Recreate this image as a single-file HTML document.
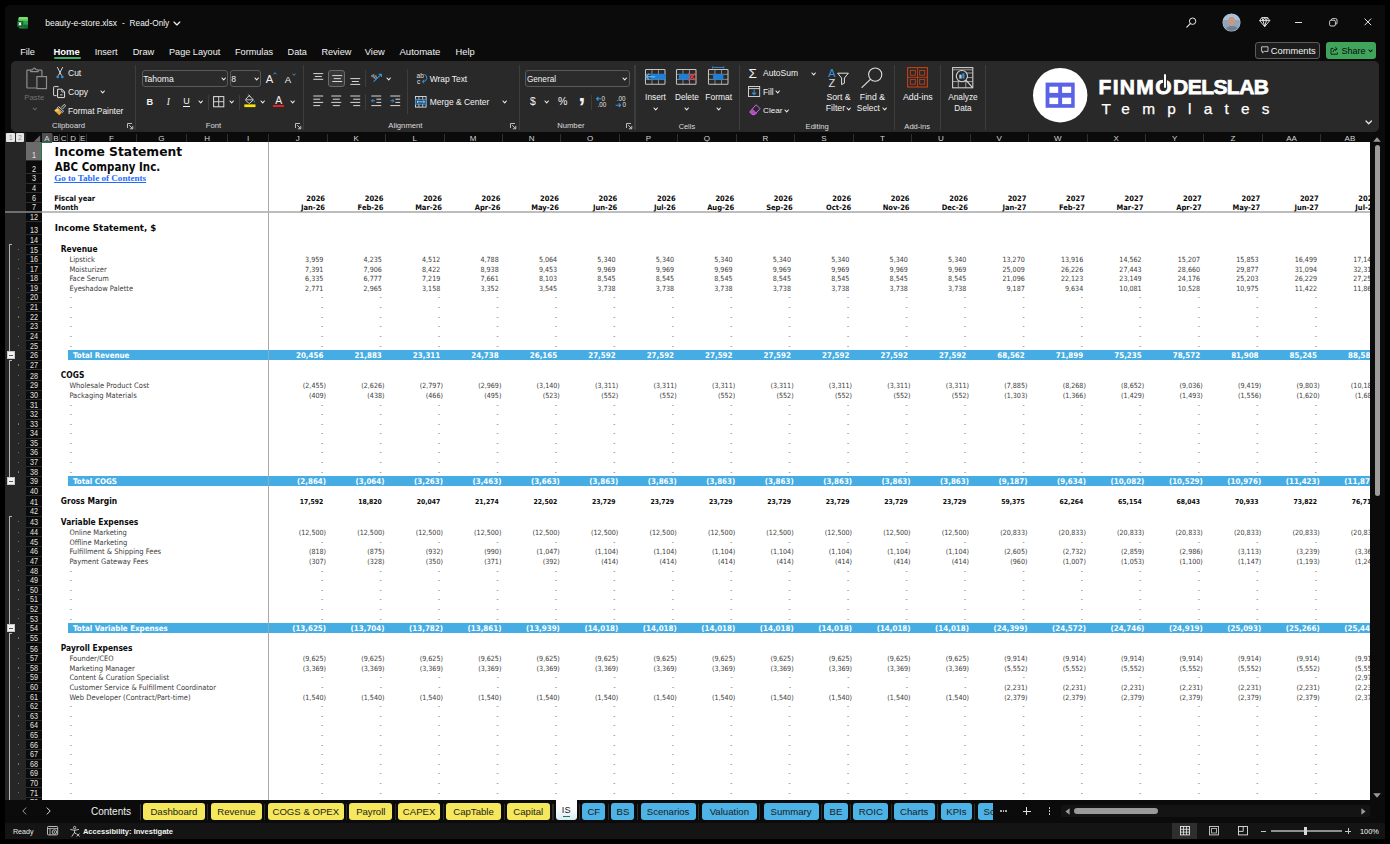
<!DOCTYPE html>
<html lang="en"><head><meta charset="utf-8"><title>beauty-e-store.xlsx - Excel</title>
<style>
html,body{margin:0;padding:0;background:#000;}
body{width:1390px;height:844px;position:relative;overflow:hidden;font-family:"Liberation Sans",sans-serif;}
.b{position:absolute;}
.t{position:absolute;white-space:nowrap;line-height:0;}
.fs{font-family:"Liberation Sans",sans-serif;}
.fd{font-family:"DejaVu Sans","Liberation Sans",sans-serif;}
.fc{font-family:"DejaVu Sans Condensed","DejaVu Sans","Liberation Sans",sans-serif;}
.fr{font-family:"Liberation Serif",serif;}
svg{position:absolute;overflow:visible;}
</style></head><body>

<div class="b" style="left:5.00px;top:5.00px;width:1380.00px;height:834.00px;background:#0b0b0b;border-radius:5px 0 0 0;"></div>
<div class="b" style="left:5.00px;top:822.70px;width:1380.00px;height:16.30px;background:#141414;"></div>
<svg style="left:17.00px;top:16.60px" width="11.2" height="11.6" viewBox="0 0 11.2 11.6"><rect x="1.6" y="0" width="9.4" height="11.4" rx="1.3" fill="#1f8a43"/>
<rect x="1.6" y="0" width="9.4" height="3.9" rx="1.3" fill="#7adf62"/><rect x="1.6" y="2.4" width="9.4" height="1.5" fill="#55c45a"/>
<rect x="6.4" y="3.9" width="4.6" height="3.8" fill="#2fa24f"/><rect x="6.4" y="7.7" width="4.6" height="3.7" rx="1" fill="#1a6a35"/>
<rect x="0" y="3.9" width="5.9" height="6" rx="0.9" fill="#0e5c2b"/>
<path d="M1.7 5.4L4.2 8.4M4.2 5.4L1.7 8.4" stroke="#fff" stroke-width="1.05"/></svg>
<div class="t fs" style="top:23.25px;font-size:8.5px;color:#f2f2f2;left:45.20px;">beauty-e-store.xlsx</div>
<div class="t fs" style="top:23.25px;font-size:8.5px;color:#f2f2f2;left:121.90px;">-</div>
<div class="t fs" style="top:23.25px;font-size:8.3px;color:#f2f2f2;left:129.60px;">Read-Only</div>
<svg style="left:172.90px;top:20.70px" width="7.8" height="5.0" viewBox="0 0 7.8 5.0"><path d="M1 1L3.90 4.00L6.80 1" fill="none" stroke="#f2f2f2" stroke-width="1.15" stroke-linecap="round" stroke-linejoin="round"/></svg>
<svg style="left:1185.50px;top:16.50px" width="11" height="11" viewBox="0 0 11 11"><circle cx="6.6" cy="4.2" r="3.2" fill="none" stroke="#e8e8e8" stroke-width="1"/><path d="M4.3 6.6L0.8 10.2" stroke="#e8e8e8" stroke-width="1.1" stroke-linecap="round"/></svg>
<div class="b" style="left:1223.2px;top:14.1px;width:16.6px;height:16.6px;border-radius:50%;overflow:hidden;background:#8fa5bd;box-shadow:0 0 0 0.5px #bfc7cf;"><div class="b" style="left:0;top:0;width:17px;height:6px;background:#adc0d4"></div><div class="b" style="left:4.9px;top:3.0px;width:7.2px;height:8.8px;border-radius:50%;background:#c39a87"></div><div class="b" style="left:1.4px;top:12.0px;width:14px;height:10px;border-radius:50%;background:#6e8095"></div></div>
<svg style="left:1259.00px;top:16.60px" width="11.4" height="10.4" viewBox="0 0 11.4 10.4"><path d="M2.8 0.6H8.6L10.8 3.6L5.7 9.6L0.6 3.6Z M0.6 3.6H10.8 M2.8 0.6L4 3.6L5.7 9.6L7.4 3.6L8.6 0.6 M4 3.6L5.7 0.6L7.4 3.6" fill="none" stroke="#e8e8e8" stroke-width="0.95" stroke-linejoin="round"/></svg>
<div class="b" style="left:1295.20px;top:21.60px;width:7.20px;height:0.90px;background:#e0e0e0;"></div>
<svg style="left:1328.50px;top:17.60px" width="9" height="9" viewBox="0 0 9 9"><rect x="0.6" y="2.2" width="5.8" height="5.8" rx="1.4" fill="none" stroke="#e0e0e0" stroke-width="0.9"/><path d="M2.4 2.2V1.9Q2.4 0.6 3.7 0.6H6.6Q8 0.6 8 2V5Q8 6.3 6.7 6.3H6.4" fill="none" stroke="#e0e0e0" stroke-width="0.9"/></svg>
<svg style="left:1363.50px;top:18.20px" width="8" height="8" viewBox="0 0 8 8"><path d="M0.6 0.6L7.2 7.2M7.2 0.6L0.6 7.2" stroke="#e8e8e8" stroke-width="1"/></svg>
<div class="b" style="left:1255.30px;top:41.50px;width:64.60px;height:17.40px;background:#1c1c1c;border:0.8px solid #5c5c5c;border-radius:3px;box-sizing:border-box;"></div>
<svg style="left:1260.60px;top:46.00px" width="8" height="8" viewBox="0 0 8 8"><path d="M0.6 0.8H7V5.4H3.2L1.6 6.9V5.4H0.6Z" fill="none" stroke="#e8e8e8" stroke-width="0.8" stroke-linejoin="round"/></svg>
<div class="t fs" style="top:51.25px;font-size:9.3px;color:#f2f2f2;left:1270.80px;">Comments</div>
<div class="b" style="left:1326.00px;top:41.50px;width:50.20px;height:17.40px;background:#3ea55b;border-radius:3px;"></div>
<svg style="left:1330.40px;top:45.60px" width="9" height="9" viewBox="0 0 9 9"><path d="M3.4 2.4H1V8.2H7.4V6.4" fill="none" stroke="#111" stroke-width="0.85"/><path d="M3 6Q3.2 3 6.6 2.9M5.2 1L7.2 2.9L5.2 4.8" fill="none" stroke="#111" stroke-width="0.85" stroke-linejoin="round"/></svg>
<div class="t fs" style="top:51.25px;font-size:9.0px;color:#0b0b0b;left:1341.40px;">Share</div>
<svg style="left:1368.00px;top:48.75px" width="5.2" height="3.7" viewBox="0 0 5.2 3.7"><path d="M1 1L2.60 2.70L4.20 1" fill="none" stroke="#0b0b0b" stroke-width="1.035" stroke-linecap="round" stroke-linejoin="round"/></svg>
<div class="t fs" style="top:52.25px;font-size:9.15px;color:#f2f2f2;left:20.20px;">File</div>
<div class="t fs" style="top:51.75px;font-size:9.5px;color:#fff;font-weight:bold;left:53.40px;">Home</div>
<div class="t fs" style="top:52.25px;font-size:9.15px;color:#f2f2f2;left:94.70px;">Insert</div>
<div class="t fs" style="top:52.25px;font-size:9.25px;color:#f2f2f2;left:132.70px;">Draw</div>
<div class="t fs" style="top:52.25px;font-size:9.15px;color:#f2f2f2;left:169.00px;">Page Layout</div>
<div class="t fs" style="top:52.25px;font-size:9.15px;color:#f2f2f2;left:235.00px;">Formulas</div>
<div class="t fs" style="top:52.25px;font-size:9.15px;color:#f2f2f2;left:287.60px;">Data</div>
<div class="t fs" style="top:52.25px;font-size:9.15px;color:#f2f2f2;left:321.40px;">Review</div>
<div class="t fs" style="top:52.25px;font-size:9.3px;color:#f2f2f2;left:364.80px;">View</div>
<div class="t fs" style="top:51.75px;font-size:9.6px;color:#f2f2f2;left:399.40px;">Automate</div>
<div class="t fs" style="top:52.25px;font-size:9.35px;color:#f2f2f2;left:455.60px;">Help</div>
<div class="b" style="left:53.60px;top:57.20px;width:27.40px;height:1.70px;background:#3fae62;border-radius:1px;"></div>
<div class="b" style="left:11.00px;top:61.00px;width:1368.30px;height:71.00px;background:#292929;border-radius:5px;"></div>
<svg style="left:25.50px;top:66.50px" width="22" height="23" viewBox="0 0 22 23"><path d="M4.4 3.2H1.4Q0.9 3.2 0.9 3.7V20.5Q0.9 21 1.4 21H10.2M12.4 3.2H15.4Q15.9 3.2 15.9 3.7V9" fill="none" stroke="#8e8e8e" stroke-width="1.2"/>
<path d="M4.6 4.6V3L6.6 2.6Q8.4 -0.4 10.2 2.6L12.2 3V4.6Z" fill="none" stroke="#8e8e8e" stroke-width="1.1" stroke-linejoin="round"/>
<rect x="10.9" y="9.6" width="9.6" height="12" fill="#292929" stroke="#8e8e8e" stroke-width="1.2"/></svg>
<div class="t fs" style="top:97.75px;font-size:7.8px;color:#727272;left:-115.70px;width:300px;text-align:center;">Paste</div>
<svg style="left:31.60px;top:106.70px" width="5.6" height="3.8" viewBox="0 0 5.6 3.8"><path d="M1 1L2.80 2.80L4.60 1" fill="none" stroke="#6a6a6a" stroke-width="1.035" stroke-linecap="round" stroke-linejoin="round"/></svg>
<svg style="left:55.60px;top:67.20px" width="8" height="12" viewBox="0 0 8 12"><path d="M1.4 0.4L5.4 8.2M6.6 0.4L2.6 8.2" stroke="#e4e4e4" stroke-width="0.9" stroke-linecap="round"/>
<circle cx="1.7" cy="9.9" r="1.35" fill="#2f8fe0"/><circle cx="6.3" cy="9.9" r="1.35" fill="#2f8fe0"/></svg>
<div class="t fs" style="top:73.25px;font-size:8.5px;color:#f2f2f2;left:68.00px;">Cut</div>
<svg style="left:53.40px;top:85.60px" width="12.4" height="12.2" viewBox="0 0 12.4 12.2"><path d="M3.6 9.6H1.2Q0.6 9.6 0.6 9V1.2Q0.6 0.6 1.2 0.6H5.6" fill="none" stroke="#d8d8d8" stroke-width="1"/>
<path d="M4.6 3.2H9L11.6 5.8V11.2Q11.6 11.6 11.2 11.6H5Q4.6 11.6 4.6 11.2Z" fill="#292929" stroke="#e4e4e4" stroke-width="1" stroke-linejoin="round"/>
<path d="M8.8 3.4V6H11.4" fill="none" stroke="#e4e4e4" stroke-width="0.8"/><rect x="7.2" y="8" width="2.4" height="1.6" fill="#9a9a9a"/></svg>
<div class="t fs" style="top:92.25px;font-size:8.6px;color:#f2f2f2;left:68.00px;">Copy</div>
<svg style="left:100.20px;top:89.70px" width="5.4" height="3.8" viewBox="0 0 5.4 3.8"><path d="M1 1L2.70 2.80L4.40 1" fill="none" stroke="#f2f2f2" stroke-width="1.0924999999999998" stroke-linecap="round" stroke-linejoin="round"/></svg>
<svg style="left:53.80px;top:104.00px" width="12" height="11.6" viewBox="0 0 12 11.6"><path d="M7.2 3.6L9.6 0.9Q10.4 0.2 11.1 0.9Q11.7 1.6 11 2.4L8.6 5" fill="none" stroke="#e4e4e4" stroke-width="0.9"/>
<path d="M4.6 2.6L9.6 7.2L8.2 8.4L3.4 3.8Z" fill="#292929" stroke="#e4e4e4" stroke-width="0.9" stroke-linejoin="round"/>
<path d="M3.2 4.2L7.8 8.8L5.2 11.2L0.4 6.4Z" fill="#f0a62a"/><path d="M3.2 4.2L5.6 6.6L1.6 7.6L0.4 6.4Z" fill="#f7d26a"/></svg>
<div class="t fs" style="top:111.25px;font-size:8.4px;color:#f2f2f2;left:68.00px;">Format Painter</div>
<div class="t fs" style="top:125.75px;font-size:7.7px;color:#dcdcdc;left:52.10px;">Clipboard</div>
<svg style="left:126.70px;top:122.90px" width="6.4" height="6.4" viewBox="0 0 6.4 6.4"><path d="M0.5 5V0.5H5" fill="none" stroke="#d0d0d0" stroke-width="0.9"/><path d="M2.2 2.2L5.6 5.6M5.8 2.9V5.8H2.9" fill="none" stroke="#d0d0d0" stroke-width="0.9"/></svg>
<div class="b" style="left:134.80px;top:65.00px;width:1.20px;height:64.60px;background:#3d3d3d;"></div>
<div class="b" style="left:141.50px;top:70.40px;width:86.10px;height:16.60px;background:#2b2b2b;border:0.8px solid #5a5a5a;border-radius:3px;box-sizing:border-box;"></div>
<div class="t fs" style="top:79.25px;font-size:8.6px;color:#f2f2f2;left:143.20px;">Tahoma</div>
<svg style="left:220.90px;top:77.10px" width="5.4" height="3.8" viewBox="0 0 5.4 3.8"><path d="M1 1L2.70 2.80L4.40 1" fill="none" stroke="#f2f2f2" stroke-width="1.0924999999999998" stroke-linecap="round" stroke-linejoin="round"/></svg>
<div class="b" style="left:229.70px;top:70.40px;width:31.10px;height:16.60px;background:#2b2b2b;border:0.8px solid #5a5a5a;border-radius:3px;box-sizing:border-box;"></div>
<div class="t fs" style="top:79.25px;font-size:8.6px;color:#f2f2f2;left:231.30px;">8</div>
<svg style="left:253.60px;top:77.10px" width="5.4" height="3.8" viewBox="0 0 5.4 3.8"><path d="M1 1L2.70 2.80L4.40 1" fill="none" stroke="#f2f2f2" stroke-width="1.0924999999999998" stroke-linecap="round" stroke-linejoin="round"/></svg>
<div class="t fs" style="top:79.25px;font-size:11.2px;color:#f2f2f2;left:265.80px;">A</div>
<svg style="left:273.40px;top:72.40px" width="4" height="3" viewBox="0 0 4 3"><path d="M0.5 2.4L2 0.6L3.5 2.4" fill="none" stroke="#3a96dd" stroke-width="0.9"/></svg>
<div class="t fs" style="top:79.75px;font-size:9.6px;color:#f2f2f2;left:284.80px;">A</div>
<svg style="left:291.60px;top:72.60px" width="4" height="3" viewBox="0 0 4 3"><path d="M0.5 0.6L2 2.4L3.5 0.6" fill="none" stroke="#3a96dd" stroke-width="0.9"/></svg>
<div class="t fs" style="top:102.25px;font-size:9.2px;color:#f2f2f2;font-weight:bold;left:-0.10px;width:300px;text-align:center;">B</div>
<div class="t fr" style="top:102.25px;font-size:9.4px;color:#f2f2f2;left:18.20px;width:300px;text-align:center;font-style:italic;">I</div>
<div class="t fs" style="top:101.25px;font-size:9.0px;color:#f2f2f2;left:36.60px;width:300px;text-align:center;">U</div>
<div class="b" style="left:183.20px;top:105.60px;width:6.80px;height:0.80px;background:#f2f2f2;"></div>
<svg style="left:198.10px;top:99.90px" width="5.4" height="3.8" viewBox="0 0 5.4 3.8"><path d="M1 1L2.70 2.80L4.40 1" fill="none" stroke="#f2f2f2" stroke-width="1.0924999999999998" stroke-linecap="round" stroke-linejoin="round"/></svg>
<div class="b" style="left:208.00px;top:94.50px;width:1.20px;height:15.00px;background:#3d3d3d;"></div>
<svg style="left:212.60px;top:95.80px" width="11.4" height="11.4" viewBox="0 0 11.4 11.4"><rect x="0.6" y="0.6" width="10.2" height="10.2" fill="none" stroke="#dedede" stroke-width="1"/><path d="M5.7 0.6V10.8M0.6 5.7H10.8" stroke="#dedede" stroke-width="0.9"/></svg>
<svg style="left:229.30px;top:99.90px" width="5.4" height="3.8" viewBox="0 0 5.4 3.8"><path d="M1 1L2.70 2.80L4.40 1" fill="none" stroke="#f2f2f2" stroke-width="1.0924999999999998" stroke-linecap="round" stroke-linejoin="round"/></svg>
<div class="b" style="left:238.70px;top:94.50px;width:1.20px;height:15.00px;background:#3d3d3d;"></div>
<svg style="left:243.60px;top:94.40px" width="12" height="13.4" viewBox="0 0 12 13.4"><path d="M5.2 1.6L9.4 5.8L5.8 9.2Q5.2 9.6 4.6 9.2L1.8 6.4Q1.4 5.8 1.8 5.2Z" fill="none" stroke="#e4e4e4" stroke-width="0.9" stroke-linejoin="round"/>
<path d="M2 5.8H9.2" stroke="#e4e4e4" stroke-width="0.8"/><path d="M4.4 0.6L6.4 2.8" stroke="#e4e4e4" stroke-width="0.9"/>
<path d="M10.4 6.4Q11.6 8.2 10.4 8.8Q9.2 8.2 10.4 6.4Z" fill="#3a96dd"/>
<rect x="0.3" y="10.4" width="11.2" height="2.7" fill="#f7e700"/></svg>
<svg style="left:260.30px;top:99.90px" width="5.4" height="3.8" viewBox="0 0 5.4 3.8"><path d="M1 1L2.70 2.80L4.40 1" fill="none" stroke="#f2f2f2" stroke-width="1.0924999999999998" stroke-linecap="round" stroke-linejoin="round"/></svg>
<div class="t fs" style="top:100.75px;font-size:10.4px;color:#f2f2f2;left:128.80px;width:300px;text-align:center;">A</div>
<div class="b" style="left:273.20px;top:104.90px;width:11.20px;height:2.60px;background:#ee1c25;"></div>
<svg style="left:289.50px;top:99.90px" width="5.4" height="3.8" viewBox="0 0 5.4 3.8"><path d="M1 1L2.70 2.80L4.40 1" fill="none" stroke="#f2f2f2" stroke-width="1.0924999999999998" stroke-linecap="round" stroke-linejoin="round"/></svg>
<div class="t fs" style="top:125.75px;font-size:7.7px;color:#dcdcdc;left:63.40px;width:300px;text-align:center;">Font</div>
<svg style="left:294.60px;top:122.90px" width="6.4" height="6.4" viewBox="0 0 6.4 6.4"><path d="M0.5 5V0.5H5" fill="none" stroke="#d0d0d0" stroke-width="0.9"/><path d="M2.2 2.2L5.6 5.6M5.8 2.9V5.8H2.9" fill="none" stroke="#d0d0d0" stroke-width="0.9"/></svg>
<div class="b" style="left:302.90px;top:65.00px;width:1.20px;height:64.60px;background:#3d3d3d;"></div>
<svg style="left:313.00px;top:71.80px" width="12" height="12" viewBox="0 0 12 12"><path d="M0.3 1.6H10.2M1.8 4.45H8.8M0.3 7.3H10.2" stroke="#e0e0e0" stroke-width="0.95" fill="none"/></svg>
<div class="b" style="left:328.20px;top:70.20px;width:17.20px;height:16.60px;background:#383838;border:0.8px solid #6a6a6a;border-radius:3px;box-sizing:border-box;"></div>
<svg style="left:331.70px;top:73.80px" width="12" height="12" viewBox="0 0 12 12"><path d="M0.3 1.6H10.2M1.8 4.6H8.8M0.3 7.5H10.2" stroke="#e0e0e0" stroke-width="0.95" fill="none"/></svg>
<svg style="left:350.40px;top:76.70px" width="12" height="12" viewBox="0 0 12 12"><path d="M0.3 1.6H10.2M1.8 4.5H8.8M0.3 7.4H10.2" stroke="#e0e0e0" stroke-width="0.95" fill="none"/></svg>
<div class="b" style="left:364.90px;top:70.00px;width:1.20px;height:16.50px;background:#3d3d3d;"></div>
<svg style="left:371.00px;top:71.60px" width="12" height="11" viewBox="0 0 12 11"><text x="0.2" y="5.2" font-family="Liberation Sans, sans-serif" font-size="5.4" fill="#e0e0e0" transform="rotate(38 2 4)">ab</text>
<path d="M2.6 9.6L10.2 2.4M10.4 5V2.2H7.6" fill="none" stroke="#3a96dd" stroke-width="1.05" stroke-linejoin="round"/></svg>
<svg style="left:385.50px;top:76.70px" width="5.4" height="3.8" viewBox="0 0 5.4 3.8"><path d="M1 1L2.70 2.80L4.40 1" fill="none" stroke="#f2f2f2" stroke-width="1.0924999999999998" stroke-linecap="round" stroke-linejoin="round"/></svg>
<div class="b" style="left:407.00px;top:69.00px;width:1.20px;height:45.40px;background:#3d3d3d;"></div>
<svg style="left:416.80px;top:72.60px" width="11" height="11.4" viewBox="0 0 11 11.4"><text x="-0.4" y="5" font-family="Liberation Sans, sans-serif" font-size="6.6" fill="#e0e0e0">ab</text>
<text x="0" y="11" font-family="Liberation Sans, sans-serif" font-size="6.6" fill="#e0e0e0">c</text>
<path d="M7.4 1.4Q10 1.8 9.8 5.4Q9.6 8.6 5.6 8.6M7.2 6.8L5.2 8.6L7.2 10.4" fill="none" stroke="#3a96dd" stroke-width="0.95" stroke-linejoin="round"/></svg>
<div class="t fs" style="top:79.25px;font-size:8.4px;color:#f2f2f2;left:429.80px;">Wrap Text</div>
<svg style="left:313.00px;top:95.20px" width="12" height="12" viewBox="0 0 12 12"><path d="M0.3 1.0H10.2M0.3 4.2H7.2M0.3 7.4H10.2M0.3 10.6H7.2" stroke="#e0e0e0" stroke-width="0.95" fill="none"/></svg>
<svg style="left:331.40px;top:95.20px" width="12" height="12" viewBox="0 0 12 12"><path d="M0.3 1.0H10.2M1.8 4.2H8.8M0.3 7.4H10.2M1.8 10.6H8.8" stroke="#e0e0e0" stroke-width="0.95" fill="none"/></svg>
<svg style="left:350.40px;top:95.20px" width="12" height="12" viewBox="0 0 12 12"><path d="M0.3 1.0H10.2M3.2 4.2H10.2M0.3 7.4H10.2M3.2 10.6H10.2" stroke="#e0e0e0" stroke-width="0.95" fill="none"/></svg>
<div class="b" style="left:364.90px;top:93.50px;width:1.20px;height:16.50px;background:#3d3d3d;"></div>
<svg style="left:371.00px;top:95.20px" width="11" height="12" viewBox="0 0 11 12"><path d="M0.3 1H10.2M5.4 4.2H10.2M5.4 7.4H10.2M0.3 10.6H10.2" stroke="#e0e0e0" stroke-width="0.95"/><path d="M4 5.8H0.6M2 4.2L0.5 5.8L2 7.4" fill="none" stroke="#3a96dd" stroke-width="0.95"/></svg>
<svg style="left:389.60px;top:95.20px" width="11" height="12" viewBox="0 0 11 12"><path d="M0.3 1H10.2M5.4 4.2H10.2M5.4 7.4H10.2M0.3 10.6H10.2" stroke="#e0e0e0" stroke-width="0.95"/><path d="M0.4 5.8H3.8M2.4 4.2L3.9 5.8L2.4 7.4" fill="none" stroke="#3a96dd" stroke-width="0.95"/></svg>
<svg style="left:414.80px;top:95.80px" width="11.6" height="11.6" viewBox="0 0 11.6 11.6"><rect x="0.5" y="0.5" width="10.6" height="10.6" fill="none" stroke="#dedede" stroke-width="0.9"/>
<rect x="0.5" y="3.4" width="10.6" height="4.8" fill="#1d4f7c" stroke="#3a96dd" stroke-width="0.9"/>
<path d="M3.9 0.5V3.4M7.7 0.5V3.4M3.9 8.2V11.1M7.7 8.2V11.1" stroke="#dedede" stroke-width="0.8"/>
<path d="M2 5.8H9.6M3.2 4.7L2 5.8L3.2 6.9M8.4 4.7L9.6 5.8L8.4 6.9" fill="none" stroke="#e8f2fb" stroke-width="0.7"/></svg>
<div class="t fs" style="top:102.25px;font-size:8.45px;color:#f2f2f2;left:429.80px;">Merge &amp; Center</div>
<svg style="left:502.10px;top:99.90px" width="5.4" height="3.8" viewBox="0 0 5.4 3.8"><path d="M1 1L2.70 2.80L4.40 1" fill="none" stroke="#f2f2f2" stroke-width="1.0924999999999998" stroke-linecap="round" stroke-linejoin="round"/></svg>
<div class="t fs" style="top:125.75px;font-size:7.7px;color:#dcdcdc;left:255.40px;width:300px;text-align:center;">Alignment</div>
<svg style="left:510.30px;top:122.90px" width="6.4" height="6.4" viewBox="0 0 6.4 6.4"><path d="M0.5 5V0.5H5" fill="none" stroke="#d0d0d0" stroke-width="0.9"/><path d="M2.2 2.2L5.6 5.6M5.8 2.9V5.8H2.9" fill="none" stroke="#d0d0d0" stroke-width="0.9"/></svg>
<div class="b" style="left:518.50px;top:65.00px;width:1.20px;height:64.60px;background:#3d3d3d;"></div>
<div class="b" style="left:525.40px;top:70.40px;width:104.20px;height:16.60px;background:#2b2b2b;border:0.8px solid #5a5a5a;border-radius:3px;box-sizing:border-box;"></div>
<div class="t fs" style="top:79.75px;font-size:8.2px;color:#f2f2f2;left:526.90px;">General</div>
<svg style="left:622.30px;top:77.10px" width="5.4" height="3.8" viewBox="0 0 5.4 3.8"><path d="M1 1L2.70 2.80L4.40 1" fill="none" stroke="#f2f2f2" stroke-width="1.0924999999999998" stroke-linecap="round" stroke-linejoin="round"/></svg>
<div class="t fs" style="top:101.75px;font-size:10.4px;color:#f2f2f2;left:383.00px;width:300px;text-align:center;">$</div>
<svg style="left:544.30px;top:99.90px" width="5.4" height="3.8" viewBox="0 0 5.4 3.8"><path d="M1 1L2.70 2.80L4.40 1" fill="none" stroke="#f2f2f2" stroke-width="1.0924999999999998" stroke-linecap="round" stroke-linejoin="round"/></svg>
<div class="t fs" style="top:101.25px;font-size:10.6px;color:#f2f2f2;left:412.60px;width:300px;text-align:center;">%</div>
<div class="t fs" style="top:107.25px;font-size:26px;color:#f2f2f2;font-weight:bold;left:431.80px;width:300px;text-align:center;">’</div>
<div class="b" style="left:590.80px;top:94.50px;width:1.20px;height:15.00px;background:#3d3d3d;"></div>
<svg style="left:596.40px;top:95.60px" width="12" height="12" viewBox="0 0 12 12"><text x="5.6" y="5" font-family="Liberation Sans, sans-serif" font-size="6.3" fill="#e0e0e0">0</text>
<text x="1.4" y="11.4" font-family="Liberation Sans, sans-serif" font-size="6.3" fill="#e0e0e0">.00</text>
<path d="M5 2.8H0.8M2.4 1L0.6 2.8L2.4 4.6" fill="none" stroke="#3a96dd" stroke-width="1.1"/></svg>
<svg style="left:615.40px;top:95.60px" width="12" height="12" viewBox="0 0 12 12"><text x="1.8" y="5" font-family="Liberation Sans, sans-serif" font-size="6.3" fill="#e0e0e0">.00</text>
<text x="7.4" y="11.4" font-family="Liberation Sans, sans-serif" font-size="6.3" fill="#e0e0e0">0</text>
<path d="M0.6 9.2H5.4M3.8 7.4L5.6 9.2L3.8 11" fill="none" stroke="#3a96dd" stroke-width="1.1"/></svg>
<div class="t fs" style="top:125.75px;font-size:7.7px;color:#dcdcdc;left:420.80px;width:300px;text-align:center;">Number</div>
<svg style="left:626.10px;top:122.90px" width="6.4" height="6.4" viewBox="0 0 6.4 6.4"><path d="M0.5 5V0.5H5" fill="none" stroke="#d0d0d0" stroke-width="0.9"/><path d="M2.2 2.2L5.6 5.6M5.8 2.9V5.8H2.9" fill="none" stroke="#d0d0d0" stroke-width="0.9"/></svg>
<div class="b" style="left:634.40px;top:65.00px;width:1.20px;height:64.60px;background:#3d3d3d;"></div>
<svg style="left:645.00px;top:67.80px" width="21.4" height="17.7" viewBox="0 0 23 19"><path d="M0.5 6.8H21.5M0.5 12.2H21.5M7.5 1.5V17.5M14.5 1.5V17.5" stroke="#9a9a9a" stroke-width="0.9"/><rect x="0.5" y="1.5" width="21" height="16" rx="0.8" fill="none" stroke="#c4c4c4" stroke-width="1.1"/><rect x="6" y="6.4" width="16.4" height="6" fill="#1f7fd6"/><path d="M11 9.4H1.2M4.6 6.2L1 9.4L4.6 12.6" fill="none" stroke="#58aef0" stroke-width="1.5"/></svg>
<svg style="left:676.30px;top:67.80px" width="21.4" height="17.7" viewBox="0 0 23 19"><path d="M0.5 6.8H21.5M0.5 12.2H21.5M7.5 1.5V17.5M14.5 1.5V17.5" stroke="#9a9a9a" stroke-width="0.9"/><rect x="0.5" y="1.5" width="21" height="16" rx="0.8" fill="none" stroke="#c4c4c4" stroke-width="1.1"/><rect x="3" y="6.4" width="11.6" height="6" fill="#1f7fd6"/><path d="M13.2 5.4L21.2 13.4M21.2 5.4L13.2 13.4" stroke="#e23b3b" stroke-width="1.4"/></svg>
<svg style="left:707.60px;top:67.80px" width="21.4" height="17.7" viewBox="0 0 23 19"><path d="M0.5 6.8H21.5M0.5 12.2H21.5M7.5 1.5V17.5M14.5 1.5V17.5" stroke="#9a9a9a" stroke-width="0.9"/><rect x="0.5" y="1.5" width="21" height="16" rx="0.8" fill="none" stroke="#c4c4c4" stroke-width="1.1"/><rect x="7.5" y="6.8" width="7" height="5.4" fill="#1f7fd6"/><rect x="5.4" y="6.6" width="11.2" height="5.8" fill="#1f7fd6"/><path d="M5 -0.6H17M5 -1.8V0.6M17 -1.8V0.6" stroke="#3a96dd" stroke-width="0.9"/></svg>
<div class="t fs" style="top:97.25px;font-size:8.3px;color:#f2f2f2;left:505.50px;width:300px;text-align:center;">Insert</div>
<svg style="left:652.80px;top:106.90px" width="5.4" height="3.8" viewBox="0 0 5.4 3.8"><path d="M1 1L2.70 2.80L4.40 1" fill="none" stroke="#f2f2f2" stroke-width="1.0924999999999998" stroke-linecap="round" stroke-linejoin="round"/></svg>
<div class="t fs" style="top:97.75px;font-size:8.2px;color:#f2f2f2;left:536.90px;width:300px;text-align:center;">Delete</div>
<svg style="left:684.20px;top:106.90px" width="5.4" height="3.8" viewBox="0 0 5.4 3.8"><path d="M1 1L2.70 2.80L4.40 1" fill="none" stroke="#f2f2f2" stroke-width="1.0924999999999998" stroke-linecap="round" stroke-linejoin="round"/></svg>
<div class="t fs" style="top:97.25px;font-size:8.5px;color:#f2f2f2;left:568.70px;width:300px;text-align:center;">Format</div>
<svg style="left:716.00px;top:106.90px" width="5.4" height="3.8" viewBox="0 0 5.4 3.8"><path d="M1 1L2.70 2.80L4.40 1" fill="none" stroke="#f2f2f2" stroke-width="1.0924999999999998" stroke-linecap="round" stroke-linejoin="round"/></svg>
<div class="t fs" style="top:126.75px;font-size:7.4px;color:#dcdcdc;left:536.90px;width:300px;text-align:center;">Cells</div>
<div class="b" style="left:739.10px;top:65.00px;width:1.20px;height:64.60px;background:#3d3d3d;"></div>
<div class="t fs" style="top:73.75px;font-size:13.6px;color:#f2f2f2;left:748.60px;">Σ</div>
<div class="t fs" style="top:73.25px;font-size:8.5px;color:#f2f2f2;left:763.10px;">AutoSum</div>
<svg style="left:811.00px;top:71.70px" width="5.4" height="3.8" viewBox="0 0 5.4 3.8"><path d="M1 1L2.70 2.80L4.40 1" fill="none" stroke="#f2f2f2" stroke-width="1.0924999999999998" stroke-linecap="round" stroke-linejoin="round"/></svg>
<svg style="left:748.40px;top:85.60px" width="12.4" height="11.4" viewBox="0 0 12.4 11.4"><rect x="0.5" y="0.5" width="11.2" height="10" fill="none" stroke="#dedede" stroke-width="0.9"/><path d="M0.5 2.6H11.7" stroke="#dedede" stroke-width="0.9"/><path d="M6.1 3.8V8.4M4 6.6L6.1 8.6L8.2 6.6" fill="none" stroke="#3a96dd" stroke-width="1.1"/></svg>
<div class="t fs" style="top:92.75px;font-size:8.2px;color:#f2f2f2;left:763.10px;">Fill</div>
<svg style="left:775.10px;top:89.70px" width="5.4" height="3.8" viewBox="0 0 5.4 3.8"><path d="M1 1L2.70 2.80L4.40 1" fill="none" stroke="#f2f2f2" stroke-width="1.0924999999999998" stroke-linecap="round" stroke-linejoin="round"/></svg>
<svg style="left:748.80px;top:104.20px" width="12" height="11.4" viewBox="0 0 12 11.4"><path d="M7 0.8L11.2 4.6L5.6 10.6H3.2L0.8 8Z" fill="none" stroke="#d768e6" stroke-width="0.95" stroke-linejoin="round"/><path d="M3.4 5.2L7.6 9.2L5.6 10.6H3.2L0.8 8Z" fill="#b54ac8" stroke="#d768e6" stroke-width="0.6" stroke-linejoin="round"/></svg>
<div class="t fs" style="top:110.75px;font-size:8.1px;color:#f2f2f2;left:763.10px;">Clear</div>
<svg style="left:783.90px;top:108.70px" width="5.4" height="3.8" viewBox="0 0 5.4 3.8"><path d="M1 1L2.70 2.80L4.40 1" fill="none" stroke="#f2f2f2" stroke-width="1.0924999999999998" stroke-linecap="round" stroke-linejoin="round"/></svg>
<svg style="left:828.20px;top:67.60px" width="22" height="20" viewBox="0 0 22 20"><text x="0.2" y="8.8" font-family="Liberation Sans, sans-serif" font-size="11" fill="#3a96dd">A</text>
<text x="0.6" y="18.8" font-family="Liberation Sans, sans-serif" font-size="11" fill="#e0e0e0">Z</text>
<path d="M9.6 5.2H20.4L16.4 10V15.2L13.6 16.6V10Z" fill="none" stroke="#e0e0e0" stroke-width="1" stroke-linejoin="round"/></svg>
<div class="t fs" style="top:97.25px;font-size:8.7px;color:#f2f2f2;left:688.50px;width:300px;text-align:center;">Sort &amp;</div>
<div class="t fs" style="top:108.25px;font-size:8.7px;color:#f2f2f2;left:685.40px;width:300px;text-align:center;">Filter</div>
<svg style="left:846.10px;top:106.70px" width="5.4" height="3.8" viewBox="0 0 5.4 3.8"><path d="M1 1L2.70 2.80L4.40 1" fill="none" stroke="#f2f2f2" stroke-width="1.0924999999999998" stroke-linecap="round" stroke-linejoin="round"/></svg>
<svg style="left:860.60px;top:67.20px" width="23" height="21" viewBox="0 0 23 21"><circle cx="14.2" cy="7.6" r="6.6" fill="none" stroke="#e0e0e0" stroke-width="1.1"/><path d="M9.4 12.4L1 20.4" stroke="#e0e0e0" stroke-width="1.2" stroke-linecap="round"/></svg>
<div class="t fs" style="top:97.25px;font-size:8.7px;color:#f2f2f2;left:722.40px;width:300px;text-align:center;">Find &amp;</div>
<div class="t fs" style="top:108.25px;font-size:8.3px;color:#f2f2f2;left:718.40px;width:300px;text-align:center;">Select</div>
<svg style="left:881.50px;top:106.70px" width="5.4" height="3.8" viewBox="0 0 5.4 3.8"><path d="M1 1L2.70 2.80L4.40 1" fill="none" stroke="#f2f2f2" stroke-width="1.0924999999999998" stroke-linecap="round" stroke-linejoin="round"/></svg>
<div class="t fs" style="top:126.75px;font-size:7.6px;color:#dcdcdc;left:667.20px;width:300px;text-align:center;">Editing</div>
<div class="b" style="left:894.20px;top:65.00px;width:1.20px;height:64.60px;background:#3d3d3d;"></div>
<svg style="left:907.20px;top:66.90px" width="21" height="20.6" viewBox="0 0 21 20.6"><rect x="0.6" y="0.6" width="19.8" height="19.4" fill="none" stroke="#bf4019" stroke-width="1.15"/><path d="M10.5 0.6V20M0.6 10.3H20.4" stroke="#bf4019" stroke-width="0.9"/><rect x="3.3" y="3.4" width="5.0" height="4.8" fill="none" stroke="#bf4019" stroke-width="0.9"/><rect x="12.7" y="3.4" width="5.0" height="4.8" fill="none" stroke="#bf4019" stroke-width="0.9"/><rect x="3.3" y="12.4" width="5.0" height="4.8" fill="none" stroke="#bf4019" stroke-width="0.9"/><rect x="12.7" y="12.4" width="5.0" height="4.8" fill="none" stroke="#bf4019" stroke-width="0.9"/></svg>
<div class="t fs" style="top:97.25px;font-size:8.8px;color:#f2f2f2;left:767.80px;width:300px;text-align:center;">Add-ins</div>
<div class="t fs" style="top:126.75px;font-size:7.6px;color:#dcdcdc;left:767.20px;width:300px;text-align:center;">Add-ins</div>
<div class="b" style="left:939.50px;top:65.00px;width:1.20px;height:64.60px;background:#3d3d3d;"></div>
<svg style="left:952.40px;top:66.80px" width="21.4" height="21.4" viewBox="0 0 21.4 21.4"><rect x="0.6" y="0.6" width="20.2" height="20.2" fill="none" stroke="#cfcfcf" stroke-width="1.1"/>
<path d="M0.6 2.8H20.8M0.6 14.6H20.8M6.3 14.6V20.8M13.8 14.6V20.8M14 6H20.8M14 10.6H20.8" stroke="#bdbdbd" stroke-width="0.8"/>
<circle cx="9.9" cy="9.1" r="5.6" fill="#292929" stroke="#d4d4d4" stroke-width="1.1"/><path d="M13.9 13.1L20.6 20.6" stroke="#d4d4d4" stroke-width="1.2"/>
<rect x="7.3" y="7.6" width="2.3" height="4" fill="#b5cfe6"/><rect x="10.3" y="6.3" width="2.2" height="5.3" fill="#2f8fe0"/></svg>
<div class="t fs" style="top:97.25px;font-size:8.3px;color:#f2f2f2;left:812.90px;width:300px;text-align:center;">Analyze</div>
<div class="t fs" style="top:108.75px;font-size:8.2px;color:#f2f2f2;left:812.90px;width:300px;text-align:center;">Data</div>
<div class="b" style="left:984.70px;top:65.00px;width:1.20px;height:64.60px;background:#3d3d3d;"></div>
<svg style="left:1032.70px;top:68.20px" width="54.4" height="54.4" viewBox="0 0 54.4 54.4"><circle cx="27.2" cy="27.2" r="27.2" fill="#fff"/><rect x="12.6" y="14.6" width="29.1" height="25.2" fill="#5a62e6"/><rect x="16.4" y="18.7" width="8.8" height="6.2" fill="#fff"/><rect x="29.1" y="18.7" width="9.1" height="6.2" fill="#fff"/><rect x="16.4" y="29.7" width="8.8" height="6.4" fill="#fff"/><rect x="29.1" y="29.7" width="9.1" height="6.4" fill="#fff"/></svg>
<div class="t fs" style="left:1098.6px;top:86.75px;font-size:21px;font-weight:bold;color:#fff;-webkit-text-stroke:0.75px #fff"><span style="letter-spacing:1.3px">FINM</span><span style="letter-spacing:1.6px">O</span><span style="letter-spacing:-0.55px">DELSLAB</span></div>
<div class="b" style="left:1162.60px;top:73.60px;width:4.80px;height:15.80px;background:#292929;border-radius:2.4px;"></div>
<div class="b" style="left:1163.70px;top:74.40px;width:2.60px;height:14.00px;background:#fff;border-radius:1.3px;"></div>
<div class="t fs" style="top:108.75px;font-size:15.4px;color:#fff;letter-spacing:12.25px;left:1101.40px;-webkit-text-stroke:0.25px #fff;">Templates</div>
<svg style="left:1364.70px;top:120.20px" width="7.4" height="4.8" viewBox="0 0 7.4 4.8"><path d="M1 1L3.70 3.80L6.40 1" fill="none" stroke="#e8e8e8" stroke-width="1.265" stroke-linecap="round" stroke-linejoin="round"/></svg>
<div class="b" style="left:5.00px;top:132.60px;width:21.00px;height:667.50px;background:#262626;"></div>
<div class="b" style="left:26.00px;top:133.00px;width:15.80px;height:667.10px;background:#0b0b0b;"></div>
<div class="b" style="left:26.00px;top:133.00px;width:1344.00px;height:9.30px;background:#0b0b0b;"></div>
<div class="b" style="left:41.80px;top:142.30px;width:1328.20px;height:657.80px;background:#fff;"></div>
<div class="b" style="left:41.80px;top:133.00px;width:10.40px;height:9.30px;background:#4f4f4f;"></div>
<div class="b" style="left:26.00px;top:142.30px;width:15.80px;height:17.70px;background:#6b6b6b;"></div>
<div class="b" style="left:41.80px;top:141.60px;width:10.60px;height:1.20px;background:#1e7a45;"></div>
<div class="b" style="left:41.20px;top:142.30px;width:1.20px;height:17.70px;background:#1e7a45;"></div>
<div class="t fs" style="top:138.75px;font-size:8.0px;color:#d4d4d4;left:-103.00px;width:300px;text-align:center;">A</div>
<div class="b" style="left:51.80px;top:134.00px;width:0.80px;height:8.30px;background:#303030;"></div>
<div class="t fs" style="top:138.75px;font-size:8.0px;color:#d4d4d4;left:-94.10px;width:300px;text-align:center;">B</div>
<div class="b" style="left:59.20px;top:134.00px;width:0.80px;height:8.30px;background:#303030;"></div>
<div class="t fs" style="top:138.75px;font-size:8.0px;color:#d4d4d4;left:-86.45px;width:300px;text-align:center;">C</div>
<div class="b" style="left:67.10px;top:134.00px;width:0.80px;height:8.30px;background:#303030;"></div>
<div class="t fs" style="top:138.75px;font-size:8.0px;color:#d4d4d4;left:-76.80px;width:300px;text-align:center;">D</div>
<div class="b" style="left:78.50px;top:134.00px;width:0.80px;height:8.30px;background:#303030;"></div>
<div class="t fs" style="top:138.75px;font-size:8.0px;color:#d4d4d4;left:-67.30px;width:300px;text-align:center;">E</div>
<div class="b" style="left:86.10px;top:134.00px;width:0.80px;height:8.30px;background:#303030;"></div>
<div class="t fs" style="top:138.75px;font-size:8.0px;color:#d4d4d4;left:-38.65px;width:300px;text-align:center;">F</div>
<div class="b" style="left:135.80px;top:134.00px;width:0.80px;height:8.30px;background:#303030;"></div>
<div class="t fs" style="top:138.75px;font-size:8.0px;color:#d4d4d4;left:11.40px;width:300px;text-align:center;">G</div>
<div class="b" style="left:186.20px;top:134.00px;width:0.80px;height:8.30px;background:#303030;"></div>
<div class="t fs" style="top:138.75px;font-size:8.0px;color:#d4d4d4;left:57.15px;width:300px;text-align:center;">H</div>
<div class="b" style="left:227.30px;top:134.00px;width:0.80px;height:8.30px;background:#303030;"></div>
<div class="t fs" style="top:138.75px;font-size:8.0px;color:#d4d4d4;left:98.15px;width:300px;text-align:center;">I</div>
<div class="b" style="left:268.20px;top:134.00px;width:0.80px;height:8.30px;background:#303030;"></div>
<div class="t fs" style="top:138.75px;font-size:8.0px;color:#d4d4d4;left:147.83px;width:300px;text-align:center;">J</div>
<div class="b" style="left:326.65px;top:134.00px;width:0.80px;height:8.30px;background:#303030;"></div>
<div class="t fs" style="top:138.75px;font-size:8.0px;color:#d4d4d4;left:206.27px;width:300px;text-align:center;">K</div>
<div class="b" style="left:385.10px;top:134.00px;width:0.80px;height:8.30px;background:#303030;"></div>
<div class="t fs" style="top:138.75px;font-size:8.0px;color:#d4d4d4;left:264.73px;width:300px;text-align:center;">L</div>
<div class="b" style="left:443.55px;top:134.00px;width:0.80px;height:8.30px;background:#303030;"></div>
<div class="t fs" style="top:138.75px;font-size:8.0px;color:#d4d4d4;left:323.17px;width:300px;text-align:center;">M</div>
<div class="b" style="left:502.00px;top:134.00px;width:0.80px;height:8.30px;background:#303030;"></div>
<div class="t fs" style="top:138.75px;font-size:8.0px;color:#d4d4d4;left:381.62px;width:300px;text-align:center;">N</div>
<div class="b" style="left:560.45px;top:134.00px;width:0.80px;height:8.30px;background:#303030;"></div>
<div class="t fs" style="top:138.75px;font-size:8.0px;color:#d4d4d4;left:440.08px;width:300px;text-align:center;">O</div>
<div class="b" style="left:618.90px;top:134.00px;width:0.80px;height:8.30px;background:#303030;"></div>
<div class="t fs" style="top:138.75px;font-size:8.0px;color:#d4d4d4;left:498.53px;width:300px;text-align:center;">P</div>
<div class="b" style="left:677.35px;top:134.00px;width:0.80px;height:8.30px;background:#303030;"></div>
<div class="t fs" style="top:138.75px;font-size:8.0px;color:#d4d4d4;left:556.98px;width:300px;text-align:center;">Q</div>
<div class="b" style="left:735.80px;top:134.00px;width:0.80px;height:8.30px;background:#303030;"></div>
<div class="t fs" style="top:138.75px;font-size:8.0px;color:#d4d4d4;left:615.43px;width:300px;text-align:center;">R</div>
<div class="b" style="left:794.25px;top:134.00px;width:0.80px;height:8.30px;background:#303030;"></div>
<div class="t fs" style="top:138.75px;font-size:8.0px;color:#d4d4d4;left:673.88px;width:300px;text-align:center;">S</div>
<div class="b" style="left:852.70px;top:134.00px;width:0.80px;height:8.30px;background:#303030;"></div>
<div class="t fs" style="top:138.75px;font-size:8.0px;color:#d4d4d4;left:732.33px;width:300px;text-align:center;">T</div>
<div class="b" style="left:911.15px;top:134.00px;width:0.80px;height:8.30px;background:#303030;"></div>
<div class="t fs" style="top:138.75px;font-size:8.0px;color:#d4d4d4;left:790.78px;width:300px;text-align:center;">U</div>
<div class="b" style="left:969.60px;top:134.00px;width:0.80px;height:8.30px;background:#303030;"></div>
<div class="t fs" style="top:138.75px;font-size:8.0px;color:#d4d4d4;left:849.23px;width:300px;text-align:center;">V</div>
<div class="b" style="left:1028.05px;top:134.00px;width:0.80px;height:8.30px;background:#303030;"></div>
<div class="t fs" style="top:138.75px;font-size:8.0px;color:#d4d4d4;left:907.68px;width:300px;text-align:center;">W</div>
<div class="b" style="left:1086.50px;top:134.00px;width:0.80px;height:8.30px;background:#303030;"></div>
<div class="t fs" style="top:138.75px;font-size:8.0px;color:#d4d4d4;left:966.13px;width:300px;text-align:center;">X</div>
<div class="b" style="left:1144.95px;top:134.00px;width:0.80px;height:8.30px;background:#303030;"></div>
<div class="t fs" style="top:138.75px;font-size:8.0px;color:#d4d4d4;left:1024.58px;width:300px;text-align:center;">Y</div>
<div class="b" style="left:1203.40px;top:134.00px;width:0.80px;height:8.30px;background:#303030;"></div>
<div class="t fs" style="top:138.75px;font-size:8.0px;color:#d4d4d4;left:1083.03px;width:300px;text-align:center;">Z</div>
<div class="b" style="left:1261.85px;top:134.00px;width:0.80px;height:8.30px;background:#303030;"></div>
<div class="t fs" style="top:138.75px;font-size:8.0px;color:#d4d4d4;left:1141.48px;width:300px;text-align:center;">AA</div>
<div class="b" style="left:1320.30px;top:134.00px;width:0.80px;height:8.30px;background:#303030;"></div>
<div class="t fs" style="top:138.75px;font-size:8.0px;color:#d4d4d4;left:1199.93px;width:300px;text-align:center;">AB</div>
<div class="t fs" style="top:155.25px;font-size:8.6px;color:#e2e2e2;left:-116.10px;width:300px;text-align:center;transform:scaleX(0.84);">1</div>
<div class="b" style="left:26.00px;top:159.60px;width:15.80px;height:0.80px;background:#2e2e2e;"></div>
<div class="t fs" style="top:169.25px;font-size:8.6px;color:#e2e2e2;left:-116.10px;width:300px;text-align:center;transform:scaleX(0.84);">2</div>
<div class="b" style="left:26.00px;top:173.10px;width:15.80px;height:0.80px;background:#2e2e2e;"></div>
<div class="t fs" style="top:178.25px;font-size:8.6px;color:#e2e2e2;left:-116.10px;width:300px;text-align:center;transform:scaleX(0.84);">3</div>
<div class="b" style="left:26.00px;top:182.60px;width:15.80px;height:0.80px;background:#2e2e2e;"></div>
<div class="t fs" style="top:188.25px;font-size:8.6px;color:#e2e2e2;left:-116.10px;width:300px;text-align:center;transform:scaleX(0.84);">4</div>
<div class="b" style="left:26.00px;top:192.30px;width:15.80px;height:0.80px;background:#2e2e2e;"></div>
<div class="t fs" style="top:198.25px;font-size:8.6px;color:#e2e2e2;left:-116.10px;width:300px;text-align:center;transform:scaleX(0.84);">6</div>
<div class="b" style="left:26.00px;top:202.10px;width:15.80px;height:0.80px;background:#2e2e2e;"></div>
<div class="t fs" style="top:207.25px;font-size:8.6px;color:#e2e2e2;left:-116.10px;width:300px;text-align:center;transform:scaleX(0.84);">7</div>
<div class="b" style="left:26.00px;top:211.20px;width:15.80px;height:0.80px;background:#2e2e2e;"></div>
<div class="t fs" style="top:217.25px;font-size:8.6px;color:#e2e2e2;left:-116.10px;width:300px;text-align:center;transform:scaleX(0.84);">12</div>
<div class="b" style="left:26.00px;top:221.20px;width:15.80px;height:0.80px;background:#2e2e2e;"></div>
<div class="t fs" style="top:230.25px;font-size:8.6px;color:#e2e2e2;left:-116.10px;width:300px;text-align:center;transform:scaleX(0.84);">13</div>
<div class="b" style="left:26.00px;top:233.90px;width:15.80px;height:0.80px;background:#2e2e2e;"></div>
<div class="t fs" style="top:240.25px;font-size:8.6px;color:#e2e2e2;left:-116.10px;width:300px;text-align:center;transform:scaleX(0.84);">14</div>
<div class="b" style="left:26.00px;top:243.80px;width:15.80px;height:0.80px;background:#2e2e2e;"></div>
<div class="t fs" style="top:250.25px;font-size:8.6px;color:#e2e2e2;left:-116.10px;width:300px;text-align:center;transform:scaleX(0.84);">15</div>
<div class="b" style="left:26.00px;top:254.03px;width:15.80px;height:0.80px;background:#2e2e2e;"></div>
<div class="t fs" style="top:259.25px;font-size:8.6px;color:#e2e2e2;left:-116.10px;width:300px;text-align:center;transform:scaleX(0.84);">16</div>
<div class="b" style="left:26.00px;top:263.10px;width:15.80px;height:0.80px;background:#2e2e2e;"></div>
<div class="t fs" style="top:269.25px;font-size:8.6px;color:#e2e2e2;left:-116.10px;width:300px;text-align:center;transform:scaleX(0.84);">17</div>
<div class="b" style="left:26.00px;top:273.00px;width:15.80px;height:0.80px;background:#2e2e2e;"></div>
<div class="t fs" style="top:278.25px;font-size:8.6px;color:#e2e2e2;left:-116.10px;width:300px;text-align:center;transform:scaleX(0.84);">18</div>
<div class="b" style="left:26.00px;top:282.60px;width:15.80px;height:0.80px;background:#2e2e2e;"></div>
<div class="t fs" style="top:288.25px;font-size:8.6px;color:#e2e2e2;left:-116.10px;width:300px;text-align:center;transform:scaleX(0.84);">19</div>
<div class="b" style="left:26.00px;top:292.20px;width:15.80px;height:0.80px;background:#2e2e2e;"></div>
<div class="t fs" style="top:297.25px;font-size:8.6px;color:#e2e2e2;left:-116.10px;width:300px;text-align:center;transform:scaleX(0.84);">20</div>
<div class="b" style="left:26.00px;top:301.82px;width:15.80px;height:0.80px;background:#2e2e2e;"></div>
<div class="t fs" style="top:307.25px;font-size:8.6px;color:#e2e2e2;left:-116.10px;width:300px;text-align:center;transform:scaleX(0.84);">21</div>
<div class="b" style="left:26.00px;top:311.44px;width:15.80px;height:0.80px;background:#2e2e2e;"></div>
<div class="t fs" style="top:317.25px;font-size:8.6px;color:#e2e2e2;left:-116.10px;width:300px;text-align:center;transform:scaleX(0.84);">22</div>
<div class="b" style="left:26.00px;top:321.06px;width:15.80px;height:0.80px;background:#2e2e2e;"></div>
<div class="t fs" style="top:326.25px;font-size:8.6px;color:#e2e2e2;left:-116.10px;width:300px;text-align:center;transform:scaleX(0.84);">23</div>
<div class="b" style="left:26.00px;top:330.69px;width:15.80px;height:0.80px;background:#2e2e2e;"></div>
<div class="t fs" style="top:336.25px;font-size:8.6px;color:#e2e2e2;left:-116.10px;width:300px;text-align:center;transform:scaleX(0.84);">24</div>
<div class="b" style="left:26.00px;top:340.31px;width:15.80px;height:0.80px;background:#2e2e2e;"></div>
<div class="t fs" style="top:346.25px;font-size:8.6px;color:#e2e2e2;left:-116.10px;width:300px;text-align:center;transform:scaleX(0.84);">25</div>
<div class="b" style="left:26.00px;top:349.93px;width:15.80px;height:0.80px;background:#2e2e2e;"></div>
<div class="t fs" style="top:355.25px;font-size:8.6px;color:#e2e2e2;left:-116.10px;width:300px;text-align:center;transform:scaleX(0.84);">26</div>
<div class="b" style="left:26.00px;top:359.55px;width:15.80px;height:0.80px;background:#2e2e2e;"></div>
<div class="t fs" style="top:365.25px;font-size:8.6px;color:#e2e2e2;left:-116.10px;width:300px;text-align:center;transform:scaleX(0.84);">27</div>
<div class="b" style="left:26.00px;top:369.20px;width:15.80px;height:0.80px;background:#2e2e2e;"></div>
<div class="t fs" style="top:376.25px;font-size:8.6px;color:#e2e2e2;left:-116.10px;width:300px;text-align:center;transform:scaleX(0.84);">28</div>
<div class="b" style="left:26.00px;top:380.10px;width:15.80px;height:0.80px;background:#2e2e2e;"></div>
<div class="t fs" style="top:385.25px;font-size:8.6px;color:#e2e2e2;left:-116.10px;width:300px;text-align:center;transform:scaleX(0.84);">29</div>
<div class="b" style="left:26.00px;top:389.75px;width:15.80px;height:0.80px;background:#2e2e2e;"></div>
<div class="t fs" style="top:395.25px;font-size:8.6px;color:#e2e2e2;left:-116.10px;width:300px;text-align:center;transform:scaleX(0.84);">30</div>
<div class="b" style="left:26.00px;top:399.35px;width:15.80px;height:0.80px;background:#2e2e2e;"></div>
<div class="t fs" style="top:405.25px;font-size:8.6px;color:#e2e2e2;left:-116.10px;width:300px;text-align:center;transform:scaleX(0.84);">31</div>
<div class="b" style="left:26.00px;top:408.93px;width:15.80px;height:0.80px;background:#2e2e2e;"></div>
<div class="t fs" style="top:414.25px;font-size:8.6px;color:#e2e2e2;left:-116.10px;width:300px;text-align:center;transform:scaleX(0.84);">32</div>
<div class="b" style="left:26.00px;top:418.52px;width:15.80px;height:0.80px;background:#2e2e2e;"></div>
<div class="t fs" style="top:424.25px;font-size:8.6px;color:#e2e2e2;left:-116.10px;width:300px;text-align:center;transform:scaleX(0.84);">33</div>
<div class="b" style="left:26.00px;top:428.10px;width:15.80px;height:0.80px;background:#2e2e2e;"></div>
<div class="t fs" style="top:433.25px;font-size:8.6px;color:#e2e2e2;left:-116.10px;width:300px;text-align:center;transform:scaleX(0.84);">34</div>
<div class="b" style="left:26.00px;top:437.68px;width:15.80px;height:0.80px;background:#2e2e2e;"></div>
<div class="t fs" style="top:443.25px;font-size:8.6px;color:#e2e2e2;left:-116.10px;width:300px;text-align:center;transform:scaleX(0.84);">35</div>
<div class="b" style="left:26.00px;top:447.27px;width:15.80px;height:0.80px;background:#2e2e2e;"></div>
<div class="t fs" style="top:452.25px;font-size:8.6px;color:#e2e2e2;left:-116.10px;width:300px;text-align:center;transform:scaleX(0.84);">36</div>
<div class="b" style="left:26.00px;top:456.85px;width:15.80px;height:0.80px;background:#2e2e2e;"></div>
<div class="t fs" style="top:462.25px;font-size:8.6px;color:#e2e2e2;left:-116.10px;width:300px;text-align:center;transform:scaleX(0.84);">37</div>
<div class="b" style="left:26.00px;top:466.43px;width:15.80px;height:0.80px;background:#2e2e2e;"></div>
<div class="t fs" style="top:472.25px;font-size:8.6px;color:#e2e2e2;left:-116.10px;width:300px;text-align:center;transform:scaleX(0.84);">38</div>
<div class="b" style="left:26.00px;top:476.02px;width:15.80px;height:0.80px;background:#2e2e2e;"></div>
<div class="t fs" style="top:481.25px;font-size:8.6px;color:#e2e2e2;left:-116.10px;width:300px;text-align:center;transform:scaleX(0.84);">39</div>
<div class="b" style="left:26.00px;top:485.60px;width:15.80px;height:0.80px;background:#2e2e2e;"></div>
<div class="t fs" style="top:491.25px;font-size:8.6px;color:#e2e2e2;left:-116.10px;width:300px;text-align:center;transform:scaleX(0.84);">40</div>
<div class="b" style="left:26.00px;top:495.24px;width:15.80px;height:0.80px;background:#2e2e2e;"></div>
<div class="t fs" style="top:502.25px;font-size:8.6px;color:#e2e2e2;left:-116.10px;width:300px;text-align:center;transform:scaleX(0.84);">41</div>
<div class="b" style="left:26.00px;top:506.13px;width:15.80px;height:0.80px;background:#2e2e2e;"></div>
<div class="t fs" style="top:511.25px;font-size:8.6px;color:#e2e2e2;left:-116.10px;width:300px;text-align:center;transform:scaleX(0.84);">42</div>
<div class="b" style="left:26.00px;top:515.77px;width:15.80px;height:0.80px;background:#2e2e2e;"></div>
<div class="t fs" style="top:522.25px;font-size:8.6px;color:#e2e2e2;left:-116.10px;width:300px;text-align:center;transform:scaleX(0.84);">43</div>
<div class="b" style="left:26.00px;top:526.66px;width:15.80px;height:0.80px;background:#2e2e2e;"></div>
<div class="t fs" style="top:532.25px;font-size:8.6px;color:#e2e2e2;left:-116.10px;width:300px;text-align:center;transform:scaleX(0.84);">44</div>
<div class="b" style="left:26.00px;top:536.30px;width:15.80px;height:0.80px;background:#2e2e2e;"></div>
<div class="t fs" style="top:542.25px;font-size:8.6px;color:#e2e2e2;left:-116.10px;width:300px;text-align:center;transform:scaleX(0.84);">45</div>
<div class="b" style="left:26.00px;top:545.90px;width:15.80px;height:0.80px;background:#2e2e2e;"></div>
<div class="t fs" style="top:551.25px;font-size:8.6px;color:#e2e2e2;left:-116.10px;width:300px;text-align:center;transform:scaleX(0.84);">46</div>
<div class="b" style="left:26.00px;top:555.50px;width:15.80px;height:0.80px;background:#2e2e2e;"></div>
<div class="t fs" style="top:561.25px;font-size:8.6px;color:#e2e2e2;left:-116.10px;width:300px;text-align:center;transform:scaleX(0.84);">47</div>
<div class="b" style="left:26.00px;top:565.30px;width:15.80px;height:0.80px;background:#2e2e2e;"></div>
<div class="t fs" style="top:571.25px;font-size:8.6px;color:#e2e2e2;left:-116.10px;width:300px;text-align:center;transform:scaleX(0.84);">48</div>
<div class="b" style="left:26.00px;top:574.91px;width:15.80px;height:0.80px;background:#2e2e2e;"></div>
<div class="t fs" style="top:580.25px;font-size:8.6px;color:#e2e2e2;left:-116.10px;width:300px;text-align:center;transform:scaleX(0.84);">49</div>
<div class="b" style="left:26.00px;top:584.53px;width:15.80px;height:0.80px;background:#2e2e2e;"></div>
<div class="t fs" style="top:590.25px;font-size:8.6px;color:#e2e2e2;left:-116.10px;width:300px;text-align:center;transform:scaleX(0.84);">50</div>
<div class="b" style="left:26.00px;top:594.14px;width:15.80px;height:0.80px;background:#2e2e2e;"></div>
<div class="t fs" style="top:599.25px;font-size:8.6px;color:#e2e2e2;left:-116.10px;width:300px;text-align:center;transform:scaleX(0.84);">51</div>
<div class="b" style="left:26.00px;top:603.76px;width:15.80px;height:0.80px;background:#2e2e2e;"></div>
<div class="t fs" style="top:609.25px;font-size:8.6px;color:#e2e2e2;left:-116.10px;width:300px;text-align:center;transform:scaleX(0.84);">52</div>
<div class="b" style="left:26.00px;top:613.37px;width:15.80px;height:0.80px;background:#2e2e2e;"></div>
<div class="t fs" style="top:619.25px;font-size:8.6px;color:#e2e2e2;left:-116.10px;width:300px;text-align:center;transform:scaleX(0.84);">53</div>
<div class="b" style="left:26.00px;top:622.99px;width:15.80px;height:0.80px;background:#2e2e2e;"></div>
<div class="t fs" style="top:628.25px;font-size:8.6px;color:#e2e2e2;left:-116.10px;width:300px;text-align:center;transform:scaleX(0.84);">54</div>
<div class="b" style="left:26.00px;top:632.60px;width:15.80px;height:0.80px;background:#2e2e2e;"></div>
<div class="t fs" style="top:638.25px;font-size:8.6px;color:#e2e2e2;left:-116.10px;width:300px;text-align:center;transform:scaleX(0.84);">55</div>
<div class="b" style="left:26.00px;top:642.19px;width:15.80px;height:0.80px;background:#2e2e2e;"></div>
<div class="t fs" style="top:649.25px;font-size:8.6px;color:#e2e2e2;left:-116.10px;width:300px;text-align:center;transform:scaleX(0.84);">56</div>
<div class="b" style="left:26.00px;top:653.01px;width:15.80px;height:0.80px;background:#2e2e2e;"></div>
<div class="t fs" style="top:658.25px;font-size:8.6px;color:#e2e2e2;left:-116.10px;width:300px;text-align:center;transform:scaleX(0.84);">57</div>
<div class="b" style="left:26.00px;top:662.60px;width:15.80px;height:0.80px;background:#2e2e2e;"></div>
<div class="t fs" style="top:668.25px;font-size:8.6px;color:#e2e2e2;left:-116.10px;width:300px;text-align:center;transform:scaleX(0.84);">58</div>
<div class="b" style="left:26.00px;top:672.05px;width:15.80px;height:0.80px;background:#2e2e2e;"></div>
<div class="t fs" style="top:677.25px;font-size:8.6px;color:#e2e2e2;left:-116.10px;width:300px;text-align:center;transform:scaleX(0.84);">59</div>
<div class="b" style="left:26.00px;top:681.70px;width:15.80px;height:0.80px;background:#2e2e2e;"></div>
<div class="t fs" style="top:687.25px;font-size:8.6px;color:#e2e2e2;left:-116.10px;width:300px;text-align:center;transform:scaleX(0.84);">60</div>
<div class="b" style="left:26.00px;top:691.35px;width:15.80px;height:0.80px;background:#2e2e2e;"></div>
<div class="t fs" style="top:697.25px;font-size:8.6px;color:#e2e2e2;left:-116.10px;width:300px;text-align:center;transform:scaleX(0.84);">61</div>
<div class="b" style="left:26.00px;top:701.00px;width:15.80px;height:0.80px;background:#2e2e2e;"></div>
<div class="t fs" style="top:706.25px;font-size:8.6px;color:#e2e2e2;left:-116.10px;width:300px;text-align:center;transform:scaleX(0.84);">62</div>
<div class="b" style="left:26.00px;top:710.59px;width:15.80px;height:0.80px;background:#2e2e2e;"></div>
<div class="t fs" style="top:716.25px;font-size:8.6px;color:#e2e2e2;left:-116.10px;width:300px;text-align:center;transform:scaleX(0.84);">63</div>
<div class="b" style="left:26.00px;top:720.18px;width:15.80px;height:0.80px;background:#2e2e2e;"></div>
<div class="t fs" style="top:725.25px;font-size:8.6px;color:#e2e2e2;left:-116.10px;width:300px;text-align:center;transform:scaleX(0.84);">64</div>
<div class="b" style="left:26.00px;top:729.77px;width:15.80px;height:0.80px;background:#2e2e2e;"></div>
<div class="t fs" style="top:735.25px;font-size:8.6px;color:#e2e2e2;left:-116.10px;width:300px;text-align:center;transform:scaleX(0.84);">65</div>
<div class="b" style="left:26.00px;top:739.36px;width:15.80px;height:0.80px;background:#2e2e2e;"></div>
<div class="t fs" style="top:745.25px;font-size:8.6px;color:#e2e2e2;left:-116.10px;width:300px;text-align:center;transform:scaleX(0.84);">66</div>
<div class="b" style="left:26.00px;top:748.95px;width:15.80px;height:0.80px;background:#2e2e2e;"></div>
<div class="t fs" style="top:754.25px;font-size:8.6px;color:#e2e2e2;left:-116.10px;width:300px;text-align:center;transform:scaleX(0.84);">67</div>
<div class="b" style="left:26.00px;top:758.54px;width:15.80px;height:0.80px;background:#2e2e2e;"></div>
<div class="t fs" style="top:764.25px;font-size:8.6px;color:#e2e2e2;left:-116.10px;width:300px;text-align:center;transform:scaleX(0.84);">68</div>
<div class="b" style="left:26.00px;top:768.13px;width:15.80px;height:0.80px;background:#2e2e2e;"></div>
<div class="t fs" style="top:773.25px;font-size:8.6px;color:#e2e2e2;left:-116.10px;width:300px;text-align:center;transform:scaleX(0.84);">69</div>
<div class="b" style="left:26.00px;top:777.72px;width:15.80px;height:0.80px;background:#2e2e2e;"></div>
<div class="t fs" style="top:783.25px;font-size:8.6px;color:#e2e2e2;left:-116.10px;width:300px;text-align:center;transform:scaleX(0.84);">70</div>
<div class="b" style="left:26.00px;top:787.31px;width:15.80px;height:0.80px;background:#2e2e2e;"></div>
<div class="t fs" style="top:793.25px;font-size:8.6px;color:#e2e2e2;left:-116.10px;width:300px;text-align:center;transform:scaleX(0.84);">71</div>
<div class="b" style="left:26.00px;top:796.90px;width:15.80px;height:0.80px;background:#2e2e2e;"></div>
<div class="t fs" style="top:802.25px;font-size:8.6px;color:#dadada;left:-116.10px;width:300px;text-align:center;transform:scaleX(0.84);">72</div>
<svg style="left:33px;top:134.5px" width="8" height="7" viewBox="0 0 8 7"><path d="M7.2 0.3V6.7H0.6Z" fill="#6a6a6a"/></svg>
<div class="b" style="left:6.40px;top:133.40px;width:8.60px;height:8.50px;background:#e4e4e4;border-radius:1px;"></div>
<div class="t fs" style="top:137.75px;font-size:6.5px;color:#8a8a8a;left:-139.30px;width:300px;text-align:center;">1</div>
<div class="b" style="left:15.90px;top:133.40px;width:8.30px;height:8.50px;background:#e4e4e4;border-radius:1px;"></div>
<div class="t fs" style="top:137.75px;font-size:6.5px;color:#8a8a8a;left:-129.95px;width:300px;text-align:center;">2</div>
<div class="b" style="left:268.20px;top:142.30px;width:0.80px;height:657.80px;background:#a9a9a9;"></div>
<div class="b" style="left:41.80px;top:211.20px;width:1328.20px;height:1.40px;background:#bdbdbd;"></div>
<div class="b" style="left:5.00px;top:211.20px;width:36.80px;height:1.40px;background:#6f6f6f;"></div>
<div class="b" style="left:9.10px;top:244.00px;width:0.90px;height:108.33px;background:#b4b4b4;"></div>
<div class="b" style="left:9.10px;top:244.00px;width:3.20px;height:0.90px;background:#b4b4b4;"></div>
<div class="b" style="left:17.60px;top:249.02px;width:1.20px;height:1.20px;background:#8c8c8c;border-radius:1px;"></div>
<div class="b" style="left:17.60px;top:258.67px;width:1.20px;height:1.20px;background:#8c8c8c;border-radius:1px;"></div>
<div class="b" style="left:17.60px;top:268.15px;width:1.20px;height:1.20px;background:#8c8c8c;border-radius:1px;"></div>
<div class="b" style="left:17.60px;top:277.90px;width:1.20px;height:1.20px;background:#8c8c8c;border-radius:1px;"></div>
<div class="b" style="left:17.60px;top:287.50px;width:1.20px;height:1.20px;background:#8c8c8c;border-radius:1px;"></div>
<div class="b" style="left:17.60px;top:297.11px;width:1.20px;height:1.20px;background:#8c8c8c;border-radius:1px;"></div>
<div class="b" style="left:17.60px;top:306.73px;width:1.20px;height:1.20px;background:#8c8c8c;border-radius:1px;"></div>
<div class="b" style="left:17.60px;top:316.35px;width:1.20px;height:1.20px;background:#8c8c8c;border-radius:1px;"></div>
<div class="b" style="left:17.60px;top:325.97px;width:1.20px;height:1.20px;background:#8c8c8c;border-radius:1px;"></div>
<div class="b" style="left:17.60px;top:335.60px;width:1.20px;height:1.20px;background:#8c8c8c;border-radius:1px;"></div>
<div class="b" style="left:17.60px;top:345.22px;width:1.20px;height:1.20px;background:#8c8c8c;border-radius:1px;"></div>
<div class="b" style="left:6.60px;top:350.84px;width:8.40px;height:8.50px;background:#f2f2f2;border:0.8px solid #c8c8c8;box-sizing:border-box;"></div>
<div class="b" style="left:8.60px;top:354.64px;width:4.40px;height:1.00px;background:#555;"></div>
<div class="b" style="left:9.10px;top:359.75px;width:0.90px;height:118.67px;background:#b4b4b4;"></div>
<div class="b" style="left:9.10px;top:359.75px;width:3.20px;height:0.90px;background:#b4b4b4;"></div>
<div class="b" style="left:17.60px;top:364.48px;width:1.20px;height:1.20px;background:#8c8c8c;border-radius:1px;"></div>
<div class="b" style="left:17.60px;top:374.75px;width:1.20px;height:1.20px;background:#8c8c8c;border-radius:1px;"></div>
<div class="b" style="left:17.60px;top:385.02px;width:1.20px;height:1.20px;background:#8c8c8c;border-radius:1px;"></div>
<div class="b" style="left:17.60px;top:394.65px;width:1.20px;height:1.20px;background:#8c8c8c;border-radius:1px;"></div>
<div class="b" style="left:17.60px;top:404.24px;width:1.20px;height:1.20px;background:#8c8c8c;border-radius:1px;"></div>
<div class="b" style="left:17.60px;top:413.82px;width:1.20px;height:1.20px;background:#8c8c8c;border-radius:1px;"></div>
<div class="b" style="left:17.60px;top:423.41px;width:1.20px;height:1.20px;background:#8c8c8c;border-radius:1px;"></div>
<div class="b" style="left:17.60px;top:432.99px;width:1.20px;height:1.20px;background:#8c8c8c;border-radius:1px;"></div>
<div class="b" style="left:17.60px;top:442.57px;width:1.20px;height:1.20px;background:#8c8c8c;border-radius:1px;"></div>
<div class="b" style="left:17.60px;top:452.16px;width:1.20px;height:1.20px;background:#8c8c8c;border-radius:1px;"></div>
<div class="b" style="left:17.60px;top:461.74px;width:1.20px;height:1.20px;background:#8c8c8c;border-radius:1px;"></div>
<div class="b" style="left:17.60px;top:471.32px;width:1.20px;height:1.20px;background:#8c8c8c;border-radius:1px;"></div>
<div class="b" style="left:6.60px;top:476.91px;width:8.40px;height:8.50px;background:#f2f2f2;border:0.8px solid #c8c8c8;box-sizing:border-box;"></div>
<div class="b" style="left:8.60px;top:480.71px;width:4.40px;height:1.00px;background:#555;"></div>
<div class="b" style="left:9.10px;top:515.97px;width:0.90px;height:109.41px;background:#b4b4b4;"></div>
<div class="b" style="left:9.10px;top:515.97px;width:3.20px;height:0.90px;background:#b4b4b4;"></div>
<div class="b" style="left:17.60px;top:521.31px;width:1.20px;height:1.20px;background:#8c8c8c;border-radius:1px;"></div>
<div class="b" style="left:17.60px;top:531.58px;width:1.20px;height:1.20px;background:#8c8c8c;border-radius:1px;"></div>
<div class="b" style="left:17.60px;top:541.20px;width:1.20px;height:1.20px;background:#8c8c8c;border-radius:1px;"></div>
<div class="b" style="left:17.60px;top:550.80px;width:1.20px;height:1.20px;background:#8c8c8c;border-radius:1px;"></div>
<div class="b" style="left:17.60px;top:560.50px;width:1.20px;height:1.20px;background:#8c8c8c;border-radius:1px;"></div>
<div class="b" style="left:17.60px;top:570.21px;width:1.20px;height:1.20px;background:#8c8c8c;border-radius:1px;"></div>
<div class="b" style="left:17.60px;top:579.82px;width:1.20px;height:1.20px;background:#8c8c8c;border-radius:1px;"></div>
<div class="b" style="left:17.60px;top:589.44px;width:1.20px;height:1.20px;background:#8c8c8c;border-radius:1px;"></div>
<div class="b" style="left:17.60px;top:599.05px;width:1.20px;height:1.20px;background:#8c8c8c;border-radius:1px;"></div>
<div class="b" style="left:17.60px;top:608.66px;width:1.20px;height:1.20px;background:#8c8c8c;border-radius:1px;"></div>
<div class="b" style="left:17.60px;top:618.28px;width:1.20px;height:1.20px;background:#8c8c8c;border-radius:1px;"></div>
<div class="b" style="left:6.60px;top:623.89px;width:8.40px;height:8.50px;background:#f2f2f2;border:0.8px solid #c8c8c8;box-sizing:border-box;"></div>
<div class="b" style="left:8.60px;top:627.69px;width:4.40px;height:1.00px;background:#555;"></div>
<div class="b" style="left:9.10px;top:632.80px;width:0.90px;height:167.30px;background:#b4b4b4;"></div>
<div class="b" style="left:9.10px;top:632.80px;width:3.20px;height:0.90px;background:#b4b4b4;"></div>
<div class="b" style="left:17.60px;top:637.49px;width:1.20px;height:1.20px;background:#8c8c8c;border-radius:1px;"></div>
<div class="b" style="left:17.60px;top:647.70px;width:1.20px;height:1.20px;background:#8c8c8c;border-radius:1px;"></div>
<div class="b" style="left:17.60px;top:657.91px;width:1.20px;height:1.20px;background:#8c8c8c;border-radius:1px;"></div>
<div class="b" style="left:17.60px;top:667.42px;width:1.20px;height:1.20px;background:#8c8c8c;border-radius:1px;"></div>
<div class="b" style="left:17.60px;top:676.97px;width:1.20px;height:1.20px;background:#8c8c8c;border-radius:1px;"></div>
<div class="b" style="left:17.60px;top:686.62px;width:1.20px;height:1.20px;background:#8c8c8c;border-radius:1px;"></div>
<div class="b" style="left:17.60px;top:696.27px;width:1.20px;height:1.20px;background:#8c8c8c;border-radius:1px;"></div>
<div class="b" style="left:17.60px;top:705.89px;width:1.20px;height:1.20px;background:#8c8c8c;border-radius:1px;"></div>
<div class="b" style="left:17.60px;top:715.49px;width:1.20px;height:1.20px;background:#8c8c8c;border-radius:1px;"></div>
<div class="b" style="left:17.60px;top:725.07px;width:1.20px;height:1.20px;background:#8c8c8c;border-radius:1px;"></div>
<div class="b" style="left:17.60px;top:734.67px;width:1.20px;height:1.20px;background:#8c8c8c;border-radius:1px;"></div>
<div class="b" style="left:17.60px;top:744.25px;width:1.20px;height:1.20px;background:#8c8c8c;border-radius:1px;"></div>
<div class="b" style="left:17.60px;top:753.85px;width:1.20px;height:1.20px;background:#8c8c8c;border-radius:1px;"></div>
<div class="b" style="left:17.60px;top:763.44px;width:1.20px;height:1.20px;background:#8c8c8c;border-radius:1px;"></div>
<div class="b" style="left:17.60px;top:773.03px;width:1.20px;height:1.20px;background:#8c8c8c;border-radius:1px;"></div>
<div class="b" style="left:17.60px;top:782.62px;width:1.20px;height:1.20px;background:#8c8c8c;border-radius:1px;"></div>
<div class="b" style="left:17.60px;top:792.21px;width:1.20px;height:1.20px;background:#8c8c8c;border-radius:1px;"></div>
<div class="t fd" style="top:152.25px;font-size:12.3px;color:#0a0a0a;font-weight:bold;left:54.60px;">Income Statement</div>
<div class="t fc" style="top:167.25px;font-size:11.45px;color:#0a0a0a;font-weight:bold;left:54.80px;">ABC Company Inc.</div>
<div class="t fr" style="top:178.25px;font-size:9.1px;color:#1f6bff;font-weight:bold;left:54.20px;text-decoration:underline;">Go to Table of Contents</div>
<div class="t fc" style="top:198.75px;font-size:7.5px;color:#0a0a0a;font-weight:bold;left:54.20px;">Fiscal year</div>
<div class="t fc" style="top:207.75px;font-size:7.5px;color:#0a0a0a;font-weight:bold;left:54.20px;">Month</div>
<div class="t fc" style="top:227.75px;font-size:9.55px;color:#0a0a0a;font-weight:bold;left:54.80px;">Income Statement, $</div>
<style>.r{position:absolute;left:0;top:0;width:1390px;height:0;}
.r>*{position:absolute;white-space:nowrap;line-height:0;font-style:normal;font-weight:inherit;}
.rd{font-family:'DejaVu Sans Condensed', 'DejaVu Sans', 'Liberation Sans', sans-serif;color:#3c3c3c;font-size:7.1px;}
.rd>*{margin-top:-2.25px;}
.rd .l{left:69.4px;font-size:7.5px;margin-top:-2.25px;}
.rd .d{font-size:6.4px;color:#444;margin-top:-2.75px;}
.rt{font-family:'DejaVu Sans Condensed', 'DejaVu Sans', 'Liberation Sans', sans-serif;color:#fff;font-size:7.9px;font-weight:bold;}
.rt>*{margin-top:-2.25px;}
.rt .l{left:73px;}
.rg{font-family:'DejaVu Sans Condensed', 'DejaVu Sans', 'Liberation Sans', sans-serif;color:#0a0a0a;font-size:6.8px;font-weight:bold;}
.rg>*{margin-top:-1.75px;}
.rg .l{left:60.8px;font-size:8.4px;margin-top:-2.75px;}
.rh{font-family:'DejaVu Sans Condensed', 'DejaVu Sans', 'Liberation Sans', sans-serif;color:#0a0a0a;font-size:7.5px;font-weight:bold;}
.rh>*{margin-right:-1.7px;margin-top:-2.25px;}
.rx{font-family:'DejaVu Sans Condensed', 'DejaVu Sans', 'Liberation Sans', sans-serif;color:#444;font-size:6.4px;}
.rx>*{margin-top:-1.75px;}
.rx .l{left:69.8px;}
.c0{right:1066.65px}.c0.g{right:1063.95px}
.c1{right:1008.20px}.c1.g{right:1005.50px}
.c2{right:949.75px}.c2.g{right:947.05px}
.c3{right:891.30px}.c3.g{right:888.60px}
.c4{right:832.85px}.c4.g{right:830.15px}
.c5{right:774.40px}.c5.g{right:771.70px}
.c6{right:715.95px}.c6.g{right:713.25px}
.c7{right:657.50px}.c7.g{right:654.80px}
.c8{right:599.05px}.c8.g{right:596.35px}
.c9{right:540.60px}.c9.g{right:537.90px}
.c10{right:482.15px}.c10.g{right:479.45px}
.c11{right:423.70px}.c11.g{right:421.00px}
.c12{right:365.25px}.c12.g{right:362.55px}
.c13{right:306.80px}.c13.g{right:304.10px}
.c14{right:248.35px}.c14.g{right:245.65px}
.c15{right:189.90px}.c15.g{right:187.20px}
.c16{right:131.45px}.c16.g{right:128.75px}
.c17{right:73.00px}.c17.g{right:70.30px}
.c18{right:14.55px}.c18.g{right:11.85px}</style>
<div class="r rd" style="top:262px"><b class="l">Lipstick</b><i class="c0">3,959</i><i class="c1">4,235</i><i class="c2">4,512</i><i class="c3">4,788</i><i class="c4">5,064</i><i class="c5">5,340</i><i class="c6">5,340</i><i class="c7">5,340</i><i class="c8">5,340</i><i class="c9">5,340</i><i class="c10">5,340</i><i class="c11">5,340</i><i class="c12">13,270</i><i class="c13">13,916</i><i class="c14">14,562</i><i class="c15">15,207</i><i class="c16">15,853</i><i class="c17">16,499</i><i class="c18">17,145</i></div>
<div class="r rd" style="top:272px"><b class="l">Moisturizer</b><i class="c0">7,391</i><i class="c1">7,906</i><i class="c2">8,422</i><i class="c3">8,938</i><i class="c4">9,453</i><i class="c5">9,969</i><i class="c6">9,969</i><i class="c7">9,969</i><i class="c8">9,969</i><i class="c9">9,969</i><i class="c10">9,969</i><i class="c11">9,969</i><i class="c12">25,009</i><i class="c13">26,226</i><i class="c14">27,443</i><i class="c15">28,660</i><i class="c16">29,877</i><i class="c17">31,094</i><i class="c18">32,311</i></div>
<div class="r rd" style="top:281px"><b class="l">Face Serum</b><i class="c0">6,335</i><i class="c1">6,777</i><i class="c2">7,219</i><i class="c3">7,661</i><i class="c4">8,103</i><i class="c5">8,545</i><i class="c6">8,545</i><i class="c7">8,545</i><i class="c8">8,545</i><i class="c9">8,545</i><i class="c10">8,545</i><i class="c11">8,545</i><i class="c12">21,096</i><i class="c13">22,123</i><i class="c14">23,149</i><i class="c15">24,176</i><i class="c16">25,203</i><i class="c17">26,229</i><i class="c18">27,256</i></div>
<div class="r rd" style="top:291px"><b class="l">Eyeshadow Palette</b><i class="c0">2,771</i><i class="c1">2,965</i><i class="c2">3,158</i><i class="c3">3,352</i><i class="c4">3,545</i><i class="c5">3,738</i><i class="c6">3,738</i><i class="c7">3,738</i><i class="c8">3,738</i><i class="c9">3,738</i><i class="c10">3,738</i><i class="c11">3,738</i><i class="c12">9,187</i><i class="c13">9,634</i><i class="c14">10,081</i><i class="c15">10,528</i><i class="c16">10,975</i><i class="c17">11,422</i><i class="c18">11,869</i></div>
<div class="r rd" style="top:388px"><b class="l">Wholesale Product Cost</b><i class="c0 g">(2,455)</i><i class="c1 g">(2,626)</i><i class="c2 g">(2,797)</i><i class="c3 g">(2,969)</i><i class="c4 g">(3,140)</i><i class="c5 g">(3,311)</i><i class="c6 g">(3,311)</i><i class="c7 g">(3,311)</i><i class="c8 g">(3,311)</i><i class="c9 g">(3,311)</i><i class="c10 g">(3,311)</i><i class="c11 g">(3,311)</i><i class="c12 g">(7,885)</i><i class="c13 g">(8,268)</i><i class="c14 g">(8,652)</i><i class="c15 g">(9,036)</i><i class="c16 g">(9,419)</i><i class="c17 g">(9,803)</i><i class="c18 g">(10,187)</i></div>
<div class="r rd" style="top:398px"><b class="l">Packaging Materials</b><i class="c0 g">(409)</i><i class="c1 g">(438)</i><i class="c2 g">(466)</i><i class="c3 g">(495)</i><i class="c4 g">(523)</i><i class="c5 g">(552)</i><i class="c6 g">(552)</i><i class="c7 g">(552)</i><i class="c8 g">(552)</i><i class="c9 g">(552)</i><i class="c10 g">(552)</i><i class="c11 g">(552)</i><i class="c12 g">(1,303)</i><i class="c13 g">(1,366)</i><i class="c14 g">(1,429)</i><i class="c15 g">(1,493)</i><i class="c16 g">(1,556)</i><i class="c17 g">(1,620)</i><i class="c18 g">(1,683)</i></div>
<div class="r rd" style="top:535px"><b class="l">Online Marketing</b><i class="c0 g">(12,500)</i><i class="c1 g">(12,500)</i><i class="c2 g">(12,500)</i><i class="c3 g">(12,500)</i><i class="c4 g">(12,500)</i><i class="c5 g">(12,500)</i><i class="c6 g">(12,500)</i><i class="c7 g">(12,500)</i><i class="c8 g">(12,500)</i><i class="c9 g">(12,500)</i><i class="c10 g">(12,500)</i><i class="c11 g">(12,500)</i><i class="c12 g">(20,833)</i><i class="c13 g">(20,833)</i><i class="c14 g">(20,833)</i><i class="c15 g">(20,833)</i><i class="c16 g">(20,833)</i><i class="c17 g">(20,833)</i><i class="c18 g">(20,833)</i></div>
<div class="r rx" style="top:544px"><i style="left:321.07px;letter-spacing:56.370px">-------------------</i></div>
<div class="r rd" style="top:545px"><b class="l">Offline Marketing</b></div>
<div class="r rd" style="top:554px"><b class="l">Fulfillment &amp; Shipping Fees</b><i class="c0 g">(818)</i><i class="c1 g">(875)</i><i class="c2 g">(932)</i><i class="c3 g">(990)</i><i class="c4 g">(1,047)</i><i class="c5 g">(1,104)</i><i class="c6 g">(1,104)</i><i class="c7 g">(1,104)</i><i class="c8 g">(1,104)</i><i class="c9 g">(1,104)</i><i class="c10 g">(1,104)</i><i class="c11 g">(1,104)</i><i class="c12 g">(2,605)</i><i class="c13 g">(2,732)</i><i class="c14 g">(2,859)</i><i class="c15 g">(2,986)</i><i class="c16 g">(3,113)</i><i class="c17 g">(3,239)</i><i class="c18 g">(3,366)</i></div>
<div class="r rd" style="top:564px"><b class="l">Payment Gateway Fees</b><i class="c0 g">(307)</i><i class="c1 g">(328)</i><i class="c2 g">(350)</i><i class="c3 g">(371)</i><i class="c4 g">(392)</i><i class="c5 g">(414)</i><i class="c6 g">(414)</i><i class="c7 g">(414)</i><i class="c8 g">(414)</i><i class="c9 g">(414)</i><i class="c10 g">(414)</i><i class="c11 g">(414)</i><i class="c12 g">(960)</i><i class="c13 g">(1,007)</i><i class="c14 g">(1,053)</i><i class="c15 g">(1,100)</i><i class="c16 g">(1,147)</i><i class="c17 g">(1,193)</i><i class="c18 g">(1,240)</i></div>
<div class="r rd" style="top:661px"><b class="l">Founder/CEO</b><i class="c0 g">(9,625)</i><i class="c1 g">(9,625)</i><i class="c2 g">(9,625)</i><i class="c3 g">(9,625)</i><i class="c4 g">(9,625)</i><i class="c5 g">(9,625)</i><i class="c6 g">(9,625)</i><i class="c7 g">(9,625)</i><i class="c8 g">(9,625)</i><i class="c9 g">(9,625)</i><i class="c10 g">(9,625)</i><i class="c11 g">(9,625)</i><i class="c12 g">(9,914)</i><i class="c13 g">(9,914)</i><i class="c14 g">(9,914)</i><i class="c15 g">(9,914)</i><i class="c16 g">(9,914)</i><i class="c17 g">(9,914)</i><i class="c18 g">(9,914)</i></div>
<div class="r rd" style="top:671px"><b class="l">Marketing Manager</b><i class="c0 g">(3,369)</i><i class="c1 g">(3,369)</i><i class="c2 g">(3,369)</i><i class="c3 g">(3,369)</i><i class="c4 g">(3,369)</i><i class="c5 g">(3,369)</i><i class="c6 g">(3,369)</i><i class="c7 g">(3,369)</i><i class="c8 g">(3,369)</i><i class="c9 g">(3,369)</i><i class="c10 g">(3,369)</i><i class="c11 g">(3,369)</i><i class="c12 g">(5,552)</i><i class="c13 g">(5,552)</i><i class="c14 g">(5,552)</i><i class="c15 g">(5,552)</i><i class="c16 g">(5,552)</i><i class="c17 g">(5,552)</i><i class="c18 g">(5,552)</i></div>
<div class="r rd" style="top:680px"><b class="l">Content &amp; Curation Specialist</b><i class="c0 d">-</i><i class="c1 d">-</i><i class="c2 d">-</i><i class="c3 d">-</i><i class="c4 d">-</i><i class="c5 d">-</i><i class="c6 d">-</i><i class="c7 d">-</i><i class="c8 d">-</i><i class="c9 d">-</i><i class="c10 d">-</i><i class="c11 d">-</i><i class="c12 d">-</i><i class="c13 d">-</i><i class="c14 d">-</i><i class="c15 d">-</i><i class="c16 d">-</i><i class="c17 d">-</i><i class="c18 g">(2,974)</i></div>
<div class="r rd" style="top:690px"><b class="l">Customer Service &amp; Fulfillment Coordinator</b><i class="c0 d">-</i><i class="c1 d">-</i><i class="c2 d">-</i><i class="c3 d">-</i><i class="c4 d">-</i><i class="c5 d">-</i><i class="c6 d">-</i><i class="c7 d">-</i><i class="c8 d">-</i><i class="c9 d">-</i><i class="c10 d">-</i><i class="c11 d">-</i><i class="c12 g">(2,231)</i><i class="c13 g">(2,231)</i><i class="c14 g">(2,231)</i><i class="c15 g">(2,231)</i><i class="c16 g">(2,231)</i><i class="c17 g">(2,231)</i><i class="c18 g">(2,231)</i></div>
<div class="r rd" style="top:700px"><b class="l">Web Developer (Contract/Part-time)</b><i class="c0 g">(1,540)</i><i class="c1 g">(1,540)</i><i class="c2 g">(1,540)</i><i class="c3 g">(1,540)</i><i class="c4 g">(1,540)</i><i class="c5 g">(1,540)</i><i class="c6 g">(1,540)</i><i class="c7 g">(1,540)</i><i class="c8 g">(1,540)</i><i class="c9 g">(1,540)</i><i class="c10 g">(1,540)</i><i class="c11 g">(1,540)</i><i class="c12 g">(2,379)</i><i class="c13 g">(2,379)</i><i class="c14 g">(2,379)</i><i class="c15 g">(2,379)</i><i class="c16 g">(2,379)</i><i class="c17 g">(2,379)</i><i class="c18 g">(2,379)</i></div>
<div class="r rx" style="top:299px"><b class="l">-</b><i style="left:321.07px;letter-spacing:56.370px">-------------------</i></div>
<div class="r rx" style="top:309px"><b class="l">-</b><i style="left:321.07px;letter-spacing:56.370px">-------------------</i></div>
<div class="r rx" style="top:319px"><b class="l">-</b><i style="left:321.07px;letter-spacing:56.370px">-------------------</i></div>
<div class="r rx" style="top:328px"><b class="l">-</b><i style="left:321.07px;letter-spacing:56.370px">-------------------</i></div>
<div class="r rx" style="top:338px"><b class="l">-</b><i style="left:321.07px;letter-spacing:56.370px">-------------------</i></div>
<div class="r rx" style="top:348px"><b class="l">-</b><i style="left:321.07px;letter-spacing:56.370px">-------------------</i></div>
<div class="r rx" style="top:407px"><b class="l">-</b><i style="left:321.07px;letter-spacing:56.370px">-------------------</i></div>
<div class="r rx" style="top:416px"><b class="l">-</b><i style="left:321.07px;letter-spacing:56.370px">-------------------</i></div>
<div class="r rx" style="top:426px"><b class="l">-</b><i style="left:321.07px;letter-spacing:56.370px">-------------------</i></div>
<div class="r rx" style="top:435px"><b class="l">-</b><i style="left:321.07px;letter-spacing:56.370px">-------------------</i></div>
<div class="r rx" style="top:445px"><b class="l">-</b><i style="left:321.07px;letter-spacing:56.370px">-------------------</i></div>
<div class="r rx" style="top:454px"><b class="l">-</b><i style="left:321.07px;letter-spacing:56.370px">-------------------</i></div>
<div class="r rx" style="top:464px"><b class="l">-</b><i style="left:321.07px;letter-spacing:56.370px">-------------------</i></div>
<div class="r rx" style="top:474px"><b class="l">-</b><i style="left:321.07px;letter-spacing:56.370px">-------------------</i></div>
<div class="r rx" style="top:573px"><b class="l">-</b><i style="left:321.07px;letter-spacing:56.370px">-------------------</i></div>
<div class="r rx" style="top:582px"><b class="l">-</b><i style="left:321.07px;letter-spacing:56.370px">-------------------</i></div>
<div class="r rx" style="top:592px"><b class="l">-</b><i style="left:321.07px;letter-spacing:56.370px">-------------------</i></div>
<div class="r rx" style="top:601px"><b class="l">-</b><i style="left:321.07px;letter-spacing:56.370px">-------------------</i></div>
<div class="r rx" style="top:611px"><b class="l">-</b><i style="left:321.07px;letter-spacing:56.370px">-------------------</i></div>
<div class="r rx" style="top:621px"><b class="l">-</b><i style="left:321.07px;letter-spacing:56.370px">-------------------</i></div>
<div class="r rx" style="top:708px"><b class="l">-</b><i style="left:321.07px;letter-spacing:56.370px">-------------------</i></div>
<div class="r rx" style="top:718px"><b class="l">-</b><i style="left:321.07px;letter-spacing:56.370px">-------------------</i></div>
<div class="r rx" style="top:727px"><b class="l">-</b><i style="left:321.07px;letter-spacing:56.370px">-------------------</i></div>
<div class="r rx" style="top:737px"><b class="l">-</b><i style="left:321.07px;letter-spacing:56.370px">-------------------</i></div>
<div class="r rx" style="top:747px"><b class="l">-</b><i style="left:321.07px;letter-spacing:56.370px">-------------------</i></div>
<div class="r rx" style="top:756px"><b class="l">-</b><i style="left:321.07px;letter-spacing:56.370px">-------------------</i></div>
<div class="r rx" style="top:766px"><b class="l">-</b><i style="left:321.07px;letter-spacing:56.370px">-------------------</i></div>
<div class="r rx" style="top:775px"><b class="l">-</b><i style="left:321.07px;letter-spacing:56.370px">-------------------</i></div>
<div class="r rx" style="top:785px"><b class="l">-</b><i style="left:321.07px;letter-spacing:56.370px">-------------------</i></div>
<div class="r rx" style="top:795px"><b class="l">-</b><i style="left:321.07px;letter-spacing:56.370px">-------------------</i></div>
<div class="t fc" style="top:249.25px;font-size:8.4px;color:#0a0a0a;font-weight:bold;left:60.80px;">Revenue</div>
<div class="t fc" style="top:375.25px;font-size:8.4px;color:#0a0a0a;font-weight:bold;left:60.80px;">COGS</div>
<div class="t fc" style="top:522.25px;font-size:8.4px;color:#0a0a0a;font-weight:bold;left:60.80px;">Variable Expenses</div>
<div class="t fc" style="top:648.25px;font-size:8.4px;color:#0a0a0a;font-weight:bold;left:60.80px;">Payroll Expenses</div>
<div class="r rh" style="top:201px"><i class="c0">2026</i><i class="c1">2026</i><i class="c2">2026</i><i class="c3">2026</i><i class="c4">2026</i><i class="c5">2026</i><i class="c6">2026</i><i class="c7">2026</i><i class="c8">2026</i><i class="c9">2026</i><i class="c10">2026</i><i class="c11">2026</i><i class="c12">2027</i><i class="c13">2027</i><i class="c14">2027</i><i class="c15">2027</i><i class="c16">2027</i><i class="c17">2027</i><i class="c18">2027</i></div>
<div class="r rh" style="top:210px"><i class="c0">Jan-26</i><i class="c1">Feb-26</i><i class="c2">Mar-26</i><i class="c3">Apr-26</i><i class="c4">May-26</i><i class="c5">Jun-26</i><i class="c6">Jul-26</i><i class="c7">Aug-26</i><i class="c8">Sep-26</i><i class="c9">Oct-26</i><i class="c10">Nov-26</i><i class="c11">Dec-26</i><i class="c12">Jan-27</i><i class="c13">Feb-27</i><i class="c14">Mar-27</i><i class="c15">Apr-27</i><i class="c16">May-27</i><i class="c17">Jun-27</i><i class="c18">Jul-27</i></div>
<div class="r rg" style="top:504px"><b class="l">Gross Margin</b><i class="c0">17,592</i><i class="c1">18,820</i><i class="c2">20,047</i><i class="c3">21,274</i><i class="c4">22,502</i><i class="c5">23,729</i><i class="c6">23,729</i><i class="c7">23,729</i><i class="c8">23,729</i><i class="c9">23,729</i><i class="c10">23,729</i><i class="c11">23,729</i><i class="c12">59,375</i><i class="c13">62,264</i><i class="c14">65,154</i><i class="c15">68,043</i><i class="c16">70,933</i><i class="c17">73,822</i><i class="c18">76,711</i></div>
<div class="b" style="left:67.50px;top:350.33px;width:1302.50px;height:9.82px;background:#45ade3;"></div>
<div class="r rt" style="top:358px"><b class="l">Total Revenue</b><i class="c0">20,456</i><i class="c1">21,883</i><i class="c2">23,311</i><i class="c3">24,738</i><i class="c4">26,165</i><i class="c5">27,592</i><i class="c6">27,592</i><i class="c7">27,592</i><i class="c8">27,592</i><i class="c9">27,592</i><i class="c10">27,592</i><i class="c11">27,592</i><i class="c12">68,562</i><i class="c13">71,899</i><i class="c14">75,235</i><i class="c15">78,572</i><i class="c16">81,908</i><i class="c17">85,245</i><i class="c18">88,581</i></div>
<div class="b" style="left:67.50px;top:476.42px;width:1302.50px;height:9.78px;background:#45ade3;"></div>
<div class="r rt" style="top:484px"><b class="l">Total COGS</b><i class="c0 g">(2,864)</i><i class="c1 g">(3,064)</i><i class="c2 g">(3,263)</i><i class="c3 g">(3,463)</i><i class="c4 g">(3,663)</i><i class="c5 g">(3,863)</i><i class="c6 g">(3,863)</i><i class="c7 g">(3,863)</i><i class="c8 g">(3,863)</i><i class="c9 g">(3,863)</i><i class="c10 g">(3,863)</i><i class="c11 g">(3,863)</i><i class="c12 g">(9,187)</i><i class="c13 g">(9,634)</i><i class="c14 g">(10,082)</i><i class="c15 g">(10,529)</i><i class="c16 g">(10,976)</i><i class="c17 g">(11,423)</i><i class="c18 g">(11,870)</i></div>
<div class="b" style="left:67.50px;top:623.39px;width:1302.50px;height:9.81px;background:#45ade3;"></div>
<div class="r rt" style="top:631px"><b class="l">Total Variable Expenses</b><i class="c0 g">(13,625)</i><i class="c1 g">(13,704)</i><i class="c2 g">(13,782)</i><i class="c3 g">(13,861)</i><i class="c4 g">(13,939)</i><i class="c5 g">(14,018)</i><i class="c6 g">(14,018)</i><i class="c7 g">(14,018)</i><i class="c8 g">(14,018)</i><i class="c9 g">(14,018)</i><i class="c10 g">(14,018)</i><i class="c11 g">(14,018)</i><i class="c12 g">(24,399)</i><i class="c13 g">(24,572)</i><i class="c14 g">(24,746)</i><i class="c15 g">(24,919)</i><i class="c16 g">(25,093)</i><i class="c17 g">(25,266)</i><i class="c18 g">(25,440)</i></div>
<div class="b" style="left:268.20px;top:142.30px;width:0.80px;height:657.80px;background:#a9a9a9;opacity:.75;"></div>
<div class="b" style="left:1370.00px;top:132.60px;width:15.00px;height:667.50px;background:#0b0b0b;"></div>
<svg style="left:1373.4px;top:136.6px" width="8" height="5" viewBox="0 0 8 5"><path d="M4 0.2L7.8 4.8H0.2Z" fill="#9a9a9a"/></svg>
<div class="b" style="left:1374.60px;top:145.20px;width:5.90px;height:350.60px;background:#9d9d9d;border-radius:3px;"></div>
<svg style="left:1373.4px;top:792.8px" width="8" height="5" viewBox="0 0 8 5"><path d="M4 4.8L7.8 0.2H0.2Z" fill="#9a9a9a"/></svg>
<div class="b" style="left:5.00px;top:800.10px;width:1380.00px;height:22.60px;background:#0b0b0b;"></div>
<svg style="left:22.00px;top:807.20px" width="5" height="8" viewBox="0 0 5 8"><path d="M4.2 0.6L0.8 4L4.2 7.4" fill="none" stroke="#9a9a9a" stroke-width="1"/></svg>
<svg style="left:45.60px;top:807.20px" width="5" height="8" viewBox="0 0 5 8"><path d="M0.8 0.6L4.2 4L0.8 7.4" fill="none" stroke="#e0e0e0" stroke-width="1"/></svg>
<div class="t fs" style="top:811.75px;font-size:10.0px;color:#f0f0f0;left:91.00px;">Contents</div>
<div class="b" style="left:139.90px;top:803.50px;width:1.20px;height:16.00px;background:#3a3a3a;"></div>
<div class="b" style="left:143.10px;top:802.60px;width:61.50px;height:17.20px;background:#f5e85c;border-radius:3px;"></div>
<div class="t fs" style="top:811.75px;font-size:9.6px;color:#1c1c1c;left:23.85px;width:300px;text-align:center;">Dashboard</div>
<div class="b" style="left:206.90px;top:803.50px;width:1.20px;height:16.00px;background:#2c2c2c;"></div>
<div class="b" style="left:211.00px;top:802.60px;width:51.00px;height:17.20px;background:#f5e85c;border-radius:3px;"></div>
<div class="t fs" style="top:811.75px;font-size:9.6px;color:#1c1c1c;left:86.50px;width:300px;text-align:center;">Revenue</div>
<div class="b" style="left:264.30px;top:803.50px;width:1.20px;height:16.00px;background:#2c2c2c;"></div>
<div class="b" style="left:267.80px;top:802.60px;width:76.00px;height:17.20px;background:#f5e85c;border-radius:3px;"></div>
<div class="t fs" style="top:811.75px;font-size:9.6px;color:#1c1c1c;left:155.80px;width:300px;text-align:center;">COGS &amp; OPEX</div>
<div class="b" style="left:346.10px;top:803.50px;width:1.20px;height:16.00px;background:#2c2c2c;"></div>
<div class="b" style="left:349.30px;top:802.60px;width:43.00px;height:17.20px;background:#f5e85c;border-radius:3px;"></div>
<div class="t fs" style="top:811.75px;font-size:9.6px;color:#1c1c1c;left:220.80px;width:300px;text-align:center;">Payroll</div>
<div class="b" style="left:394.60px;top:803.50px;width:1.20px;height:16.00px;background:#2c2c2c;"></div>
<div class="b" style="left:397.90px;top:802.60px;width:42.40px;height:17.20px;background:#f5e85c;border-radius:3px;"></div>
<div class="t fs" style="top:811.75px;font-size:9.6px;color:#1c1c1c;left:269.10px;width:300px;text-align:center;">CAPEX</div>
<div class="b" style="left:442.60px;top:803.50px;width:1.20px;height:16.00px;background:#2c2c2c;"></div>
<div class="b" style="left:445.90px;top:802.60px;width:55.30px;height:17.20px;background:#f5e85c;border-radius:3px;"></div>
<div class="t fs" style="top:811.75px;font-size:9.6px;color:#1c1c1c;left:323.55px;width:300px;text-align:center;">CapTable</div>
<div class="b" style="left:503.50px;top:803.50px;width:1.20px;height:16.00px;background:#2c2c2c;"></div>
<div class="b" style="left:506.50px;top:802.60px;width:43.60px;height:17.20px;background:#f5e85c;border-radius:3px;"></div>
<div class="t fs" style="top:811.75px;font-size:9.6px;color:#1c1c1c;left:378.30px;width:300px;text-align:center;">Capital</div>
<div class="b" style="left:552.40px;top:803.50px;width:1.20px;height:16.00px;background:#2c2c2c;"></div>
<div class="b" style="left:555.80px;top:799.60px;width:20.80px;height:20.00px;background:#fff;border-radius:0 0 3px 3px;background:linear-gradient(#fff 35%,#d9ebf6);"></div>
<div class="t fs" style="top:810.25px;font-size:9.2px;color:#1a1a1a;left:416.20px;width:300px;text-align:center;">IS</div>
<div class="b" style="left:562.60px;top:816.40px;width:7.20px;height:1.10px;background:#1e7a45;"></div>
<div class="b" style="left:578.90px;top:803.50px;width:1.20px;height:16.00px;background:#2c2c2c;"></div>
<div class="b" style="left:582.20px;top:802.60px;width:23.20px;height:17.20px;background:#4db2e6;border-radius:3px;"></div>
<div class="t fs" style="top:811.75px;font-size:9.6px;color:#1c1c1c;left:443.80px;width:300px;text-align:center;">CF</div>
<div class="b" style="left:607.70px;top:803.50px;width:1.20px;height:16.00px;background:#2c2c2c;"></div>
<div class="b" style="left:611.30px;top:802.60px;width:23.20px;height:17.20px;background:#4db2e6;border-radius:3px;"></div>
<div class="t fs" style="top:811.75px;font-size:9.6px;color:#1c1c1c;left:472.90px;width:300px;text-align:center;">BS</div>
<div class="b" style="left:636.80px;top:803.50px;width:1.20px;height:16.00px;background:#2c2c2c;"></div>
<div class="b" style="left:640.50px;top:802.60px;width:55.20px;height:17.20px;background:#4db2e6;border-radius:3px;"></div>
<div class="t fs" style="top:811.75px;font-size:9.6px;color:#1c1c1c;left:518.10px;width:300px;text-align:center;">Scenarios</div>
<div class="b" style="left:698.00px;top:803.50px;width:1.20px;height:16.00px;background:#2c2c2c;"></div>
<div class="b" style="left:701.70px;top:802.60px;width:55.30px;height:17.20px;background:#4db2e6;border-radius:3px;"></div>
<div class="t fs" style="top:811.75px;font-size:9.6px;color:#1c1c1c;left:579.35px;width:300px;text-align:center;">Valuation</div>
<div class="b" style="left:759.30px;top:803.50px;width:1.20px;height:16.00px;background:#2c2c2c;"></div>
<div class="b" style="left:763.60px;top:802.60px;width:55.00px;height:17.20px;background:#4db2e6;border-radius:3px;"></div>
<div class="t fs" style="top:811.75px;font-size:9.6px;color:#1c1c1c;left:641.10px;width:300px;text-align:center;">Summary</div>
<div class="b" style="left:820.90px;top:803.50px;width:1.20px;height:16.00px;background:#2c2c2c;"></div>
<div class="b" style="left:823.90px;top:802.60px;width:24.10px;height:17.20px;background:#4db2e6;border-radius:3px;"></div>
<div class="t fs" style="top:811.75px;font-size:9.6px;color:#1c1c1c;left:685.95px;width:300px;text-align:center;">BE</div>
<div class="b" style="left:850.30px;top:803.50px;width:1.20px;height:16.00px;background:#2c2c2c;"></div>
<div class="b" style="left:853.30px;top:802.60px;width:35.10px;height:17.20px;background:#4db2e6;border-radius:3px;"></div>
<div class="t fs" style="top:811.75px;font-size:9.6px;color:#1c1c1c;left:720.85px;width:300px;text-align:center;">ROIC</div>
<div class="b" style="left:890.70px;top:803.50px;width:1.20px;height:16.00px;background:#2c2c2c;"></div>
<div class="b" style="left:893.60px;top:802.60px;width:41.30px;height:17.20px;background:#4db2e6;border-radius:3px;"></div>
<div class="t fs" style="top:811.75px;font-size:9.6px;color:#1c1c1c;left:764.25px;width:300px;text-align:center;">Charts</div>
<div class="b" style="left:937.20px;top:803.50px;width:1.20px;height:16.00px;background:#2c2c2c;"></div>
<div class="b" style="left:941.00px;top:802.60px;width:30.80px;height:17.20px;background:#4db2e6;border-radius:3px;"></div>
<div class="t fs" style="top:811.75px;font-size:9.6px;color:#1c1c1c;left:806.40px;width:300px;text-align:center;">KPIs</div>
<div class="b" style="left:974.10px;top:803.50px;width:1.20px;height:16.00px;background:#2c2c2c;"></div>
<div class="b" style="left:977.9px;top:802.6px;width:15px;height:17.2px;overflow:hidden"><div class="b" style="left:0;top:0;width:56px;height:17.2px;background:#4db2e6;border-radius:3px;"></div></div>
<div class="b" style="left:977.9px;top:0;width:15px;height:844px;overflow:hidden"><div class="t fs" style="left:5.6px;top:811.75px;font-size:9.6px;color:#1c1c1c">Scenarios</div></div>
<div class="b" style="left:1000.00px;top:810.20px;width:1.70px;height:1.70px;background:#e0e0e0;border-radius:1px;"></div>
<div class="b" style="left:1002.70px;top:810.20px;width:1.70px;height:1.70px;background:#e0e0e0;border-radius:1px;"></div>
<div class="b" style="left:1005.40px;top:810.20px;width:1.70px;height:1.70px;background:#e0e0e0;border-radius:1px;"></div>
<div class="b" style="left:1022.60px;top:810.50px;width:8.20px;height:1.00px;background:#e0e0e0;"></div>
<div class="b" style="left:1026.20px;top:806.90px;width:1.00px;height:8.20px;background:#e0e0e0;"></div>
<div class="b" style="left:1048.90px;top:807.40px;width:1.20px;height:1.20px;background:#e0e0e0;border-radius:1px;"></div>
<div class="b" style="left:1048.90px;top:810.40px;width:1.20px;height:1.20px;background:#e0e0e0;border-radius:1px;"></div>
<div class="b" style="left:1048.90px;top:813.40px;width:1.20px;height:1.20px;background:#e0e0e0;border-radius:1px;"></div>
<div class="b" style="left:1061.00px;top:804.60px;width:309.00px;height:12.80px;background:#141414;border-radius:2px;"></div>
<svg style="left:1065.00px;top:807.60px" width="5" height="7" viewBox="0 0 5 7"><path d="M4.6 0.3V6.7L0.4 3.5Z" fill="#9a9a9a"/></svg>
<div class="b" style="left:1074.00px;top:807.90px;width:84.30px;height:5.80px;background:#9a9a9a;border-radius:3px;"></div>
<svg style="left:1361.40px;top:807.60px" width="5" height="7" viewBox="0 0 5 7"><path d="M0.4 0.3V6.7L4.6 3.5Z" fill="#9a9a9a"/></svg>
<div class="b" style="left:5.00px;top:822.70px;width:1380.00px;height:16.30px;background:#141414;"></div>
<div class="t fs" style="top:832.25px;font-size:7.1px;color:#e8e8e8;left:13.00px;">Ready</div>
<svg style="left:47.20px;top:826.40px" width="11.4" height="9.6" viewBox="0 0 11.4 9.6"><rect x="0.5" y="0.5" width="10.2" height="8.4" rx="0.8" fill="none" stroke="#cfcfcf" stroke-width="0.9"/><path d="M0.5 2.6H10.7M3 2.6V8.9" stroke="#cfcfcf" stroke-width="0.8"/><circle cx="7.4" cy="6" r="2.2" fill="#141414" stroke="#cfcfcf" stroke-width="0.9"/><circle cx="7.4" cy="6" r="0.8" fill="#cfcfcf"/></svg>
<svg style="left:69.80px;top:825.80px" width="10.4" height="10.8" viewBox="0 0 10.4 10.8"><circle cx="4.6" cy="1.6" r="1.2" fill="none" stroke="#dcdcdc" stroke-width="0.8"/><path d="M0.6 3.6Q4.6 5 8.6 3.6M4.6 4.4V6.4M4.6 6.4L2 10.2M4.6 6.4L6 8" fill="none" stroke="#dcdcdc" stroke-width="0.85" stroke-linecap="round"/><path d="M6.6 7.6L9.6 10.4M9.6 7.6L6.6 10.4" stroke="#dcdcdc" stroke-width="0.85"/></svg>
<div class="t fs" style="top:831.75px;font-size:7.55px;color:#f2f2f2;font-weight:bold;left:82.90px;">Accessibility: Investigate</div>
<div class="b" style="left:1171.80px;top:823.40px;width:25.10px;height:15.20px;background:#2e2e2e;"></div>
<svg style="left:1179.60px;top:826.20px" width="10" height="9.6" viewBox="0 0 10 9.6"><rect x="0.5" y="0.5" width="9" height="8.4" fill="none" stroke="#e8e8e8" stroke-width="0.9"/><path d="M0.5 3.3H9.5M0.5 6.1H9.5M3.5 0.5V8.9M6.5 0.5V8.9" stroke="#e8e8e8" stroke-width="0.8"/></svg>
<svg style="left:1208.60px;top:826.20px" width="10" height="9.6" viewBox="0 0 10 9.6"><rect x="0.5" y="0.5" width="9" height="8.4" fill="none" stroke="#cfcfcf" stroke-width="0.9"/><rect x="2.6" y="2.4" width="4.8" height="4.6" fill="none" stroke="#cfcfcf" stroke-width="0.8"/></svg>
<svg style="left:1237.60px;top:826.20px" width="10" height="9.6" viewBox="0 0 10 9.6"><rect x="0.5" y="0.5" width="9" height="8.4" fill="none" stroke="#e0e0e0" stroke-width="0.9"/><path d="M0.5 5.4H5.2V0.5" fill="none" stroke="#e0e0e0" stroke-width="0.9"/></svg>
<div class="b" style="left:1261.20px;top:830.50px;width:4.80px;height:1.00px;background:#c4c4c4;"></div>
<div class="b" style="left:1270.60px;top:830.40px;width:71.00px;height:1.20px;background:#8e8e8e;"></div>
<div class="b" style="left:1304.40px;top:826.60px;width:2.80px;height:8.80px;background:#d8d8d8;"></div>
<div class="b" style="left:1345.40px;top:830.50px;width:5.20px;height:1.00px;background:#c4c4c4;"></div>
<div class="b" style="left:1347.50px;top:828.40px;width:1.00px;height:5.20px;background:#c4c4c4;"></div>
<div class="t fs" style="top:831.75px;font-size:7.4px;color:#f4f4f4;left:1360.00px;">100%</div>
</body></html>
